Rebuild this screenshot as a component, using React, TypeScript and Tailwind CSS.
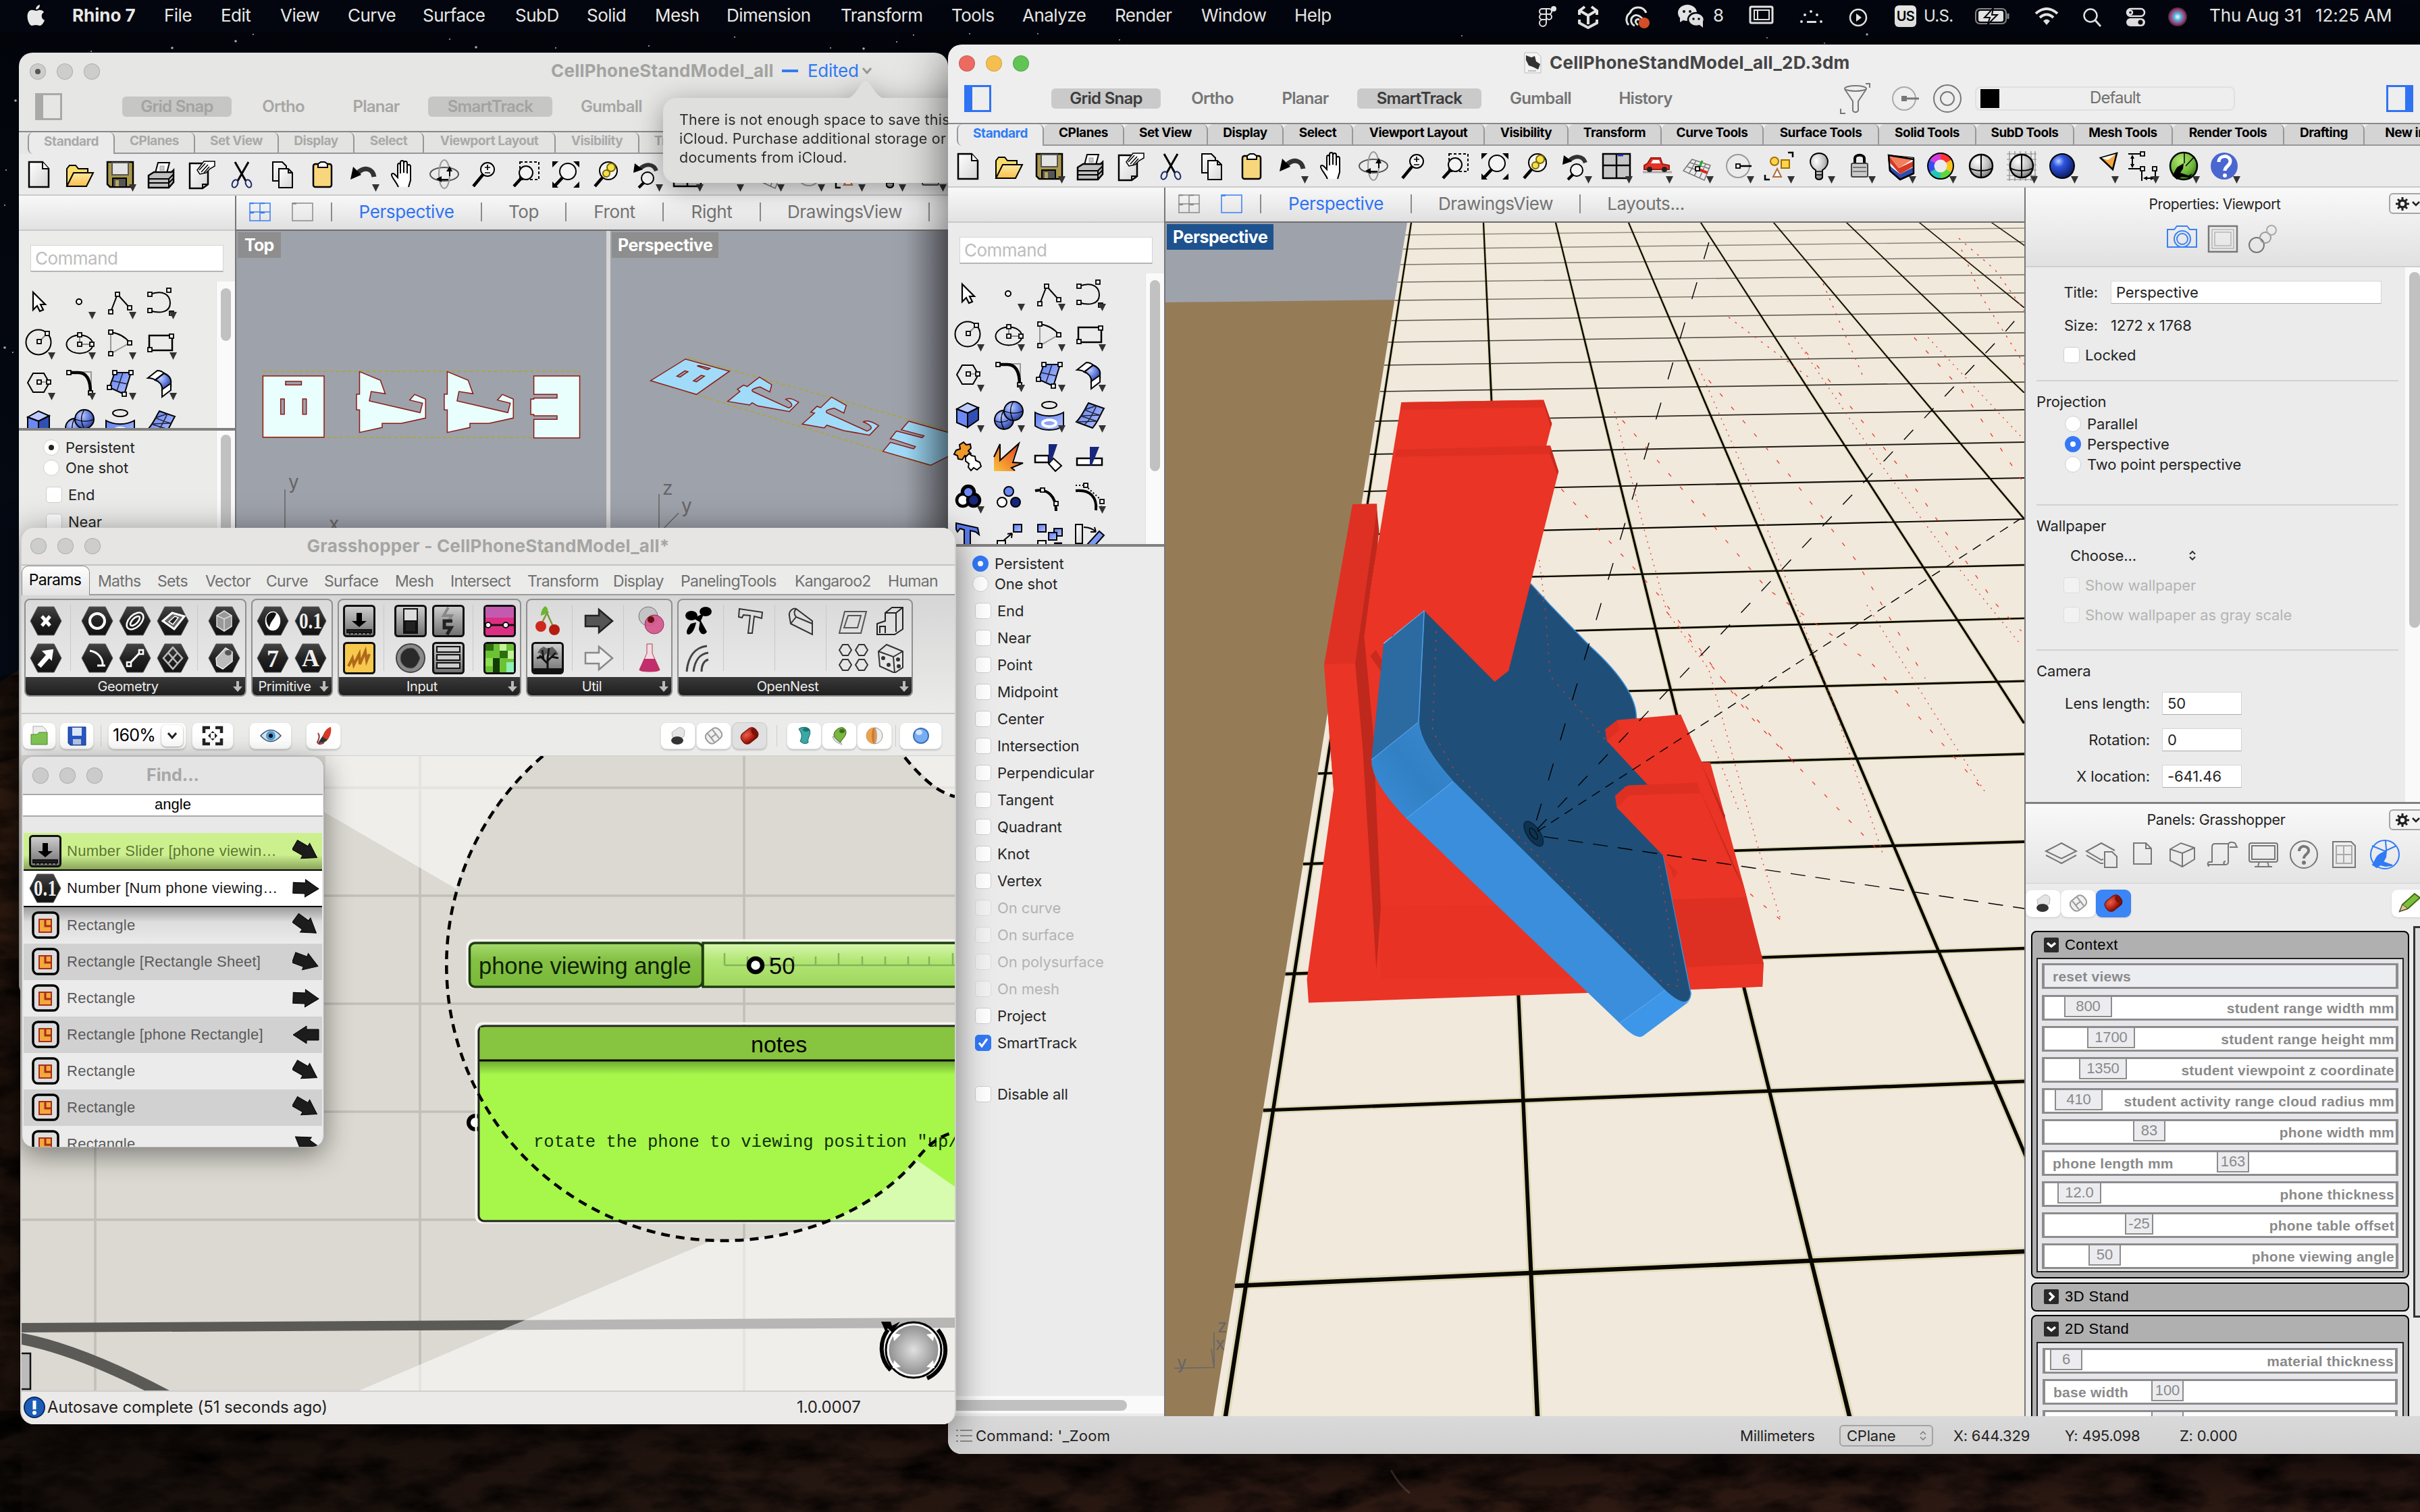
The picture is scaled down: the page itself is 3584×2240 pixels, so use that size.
import React from 'react';

type Kids = { children?: React.ReactNode };

/* ---------- shared icon primitives (60x60 cells) ---------- */
const N = ({ x, y }: { x: number; y: number }) => (
  <rect x={x - 3} y={y - 3} width="6" height="6" fill="#fff" stroke="#000" strokeWidth="1.8" />
);
const Tri = () => <path d="M43 45h11l-5.500 11z" fill="#333" />;
const Cell = ({ children, d }: Kids & { d?: boolean }) => (
  <svg viewBox="0 0 60 60" className="size-[60px] shrink-0" fill="none" stroke="#000" strokeWidth="2">
    {children}
    {d && <g stroke="none"><Tri /></g>}
  </svg>
);

const Defs = () => (
  <svg className="absolute size-0">
    <defs>
      <linearGradient id="page" x1="0" y1="0" x2="1" y2="1"><stop offset="0" stopColor="#fff" /><stop offset="1" stopColor="#d4d4d4" /></linearGradient>
      <linearGradient id="gold" x1="0" y1="0" x2="0" y2="1"><stop offset="0" stopColor="#ffe9a0" /><stop offset="1" stopColor="#f6bf4e" /></linearGradient>
      <radialGradient id="ball" cx=".35" cy=".3" r=".8"><stop offset="0" stopColor="#c3cfff" /><stop offset=".5" stopColor="#6580e0" /><stop offset="1" stopColor="#24357e" /></radialGradient>
      <radialGradient id="grey" cx=".35" cy=".3" r=".8"><stop offset="0" stopColor="#fff" /><stop offset=".6" stopColor="#bbb" /><stop offset="1" stopColor="#666" /></radialGradient>
      <radialGradient id="deep" cx=".35" cy=".3" r=".8"><stop offset="0" stopColor="#b8d0ff" /><stop offset=".3" stopColor="#2f55e0" /><stop offset="1" stopColor="#03104f" /></radialGradient>
      <linearGradient id="blue" x1="0" y1="0" x2="1" y2="1"><stop offset="0" stopColor="#5b7cf2" /><stop offset="1" stopColor="#b5c4fb" /></linearGradient>
      <linearGradient id="fire" x1="0" y1="1" x2="1" y2="0"><stop offset="0" stopColor="#f9c33c" /><stop offset="1" stopColor="#e6391d" /></linearGradient>
      <linearGradient id="ink" x1="0" y1="0" x2="0" y2="1"><stop offset="0" stopColor="#444" /><stop offset=".5" stopColor="#222" /><stop offset="1" stopColor="#111" /></linearGradient>
      <linearGradient id="steel" x1="0" y1="0" x2="0" y2="1"><stop offset="0" stopColor="#d0d0d0" /><stop offset="1" stopColor="#6e6e6e" /></linearGradient>
      <radialGradient id="ghg" cx=".4" cy=".3" r=".8"><stop offset="0" stopColor="#b4e870" /><stop offset=".6" stopColor="#6db53a" /><stop offset="1" stopColor="#1f5a0c" /></radialGradient>
      <radialGradient id="siri"><stop offset="0" stopColor="#fff" /><stop offset=".4" stopColor="#4bb6d8" /><stop offset=".75" stopColor="#b03a7c" /><stop offset="1" stopColor="#333" /></radialGradient>
      <radialGradient id="redcan" cx=".4" cy=".3" r=".8"><stop offset="0" stopColor="#e8604a" /><stop offset=".6" stopColor="#b01d10" /><stop offset="1" stopColor="#5a0a04" /></radialGradient>
    </defs>
  </svg>
);

const Lens = ({ x = 34, y = 23, r = 10 }: { x?: number; y?: number; r?: number }) => (
  <g><path d={`M${x - r * 0.7} ${y + r * 0.8}L13 48`} strokeWidth="4.500" /><circle cx={x} cy={y} r={r} fill="#f4f4f4" /></g>
);

const toolIcons: React.ReactNode[] = [
  <Cell key="0"><path d="M15 12h20l9 10v27H15z" fill="url(#page)" strokeWidth="2.500" /><path d="M35 12v10h9" fill="#fff" /></Cell>,
  <Cell key="1"><path d="M11 48V22l4-5h9l4 5h14v8" fill="#f9dd6a" /><path d="M11 48l10-20h29L40 48z" fill="url(#gold)" /></Cell>,
  <Cell key="2" d><path d="M11 12h38v37H15l-4-4z" fill="#a9974b" strokeWidth="2.500" /><rect x="18" y="13" width="24" height="18" fill="#e3e3e3" stroke="#555" /><path d="M19 36h20v13H19z" fill="#555" /><path d="M23 39h5v9h-5z" fill="#b7a75e" stroke="none" /></Cell>,
  <Cell key="3"><path d="M22 28l4-15h17l-4 15" fill="#fff" /><path d="M12 32l8-5h26l3-3v18l-7 8H12z" fill="#bfbfbf" strokeWidth="2.500" /><path d="M12 37h30l7-7M12 43h30l7-7M42 37v12" /><rect x="29" y="18" width="6" height="6" fill="#ccc" stroke="#999" strokeWidth="1" /></Cell>,
  <Cell key="4"><path d="M13 14h24l3 4v27l-8 6H13z" fill="url(#page)" strokeWidth="2.500" /><path d="M32 51v-6h8" /><path d="M24 24l10-13h16v7l-7 4-6 6-9 2z" fill="#fff" strokeWidth="1.500" /><path d="M27 24l9-10M30 27l10-11M34 28l8-9" strokeWidth="1.500" /></Cell>,
  <Cell key="5"><path d="M20 12l16 28M40 12L24 40" strokeWidth="3" /><ellipse cx="20" cy="44" rx="4" ry="6" stroke="#1c2a66" transform="rotate(25 20 44)" /><ellipse cx="40" cy="44" rx="4" ry="6" stroke="#1c2a66" transform="rotate(-25 40 44)" /></Cell>,
  <Cell key="6"><path d="M16 12h14l6 6v22H16z" fill="url(#page)" /><path d="M25 22h14l6 6v22H25z" fill="url(#page)" /><path d="M39 22v6h6" /></Cell>,
  <Cell key="7"><rect x="16" y="15" width="27" height="34" rx="3" fill="#f8d67c" strokeWidth="2.500" /><path d="M23 20v-5l4-3h6l4 3v5z" fill="#fff" /></Cell>,
  <Cell key="8" d><path d="M46 34C44 22 32 18 22 28" stroke="#333" strokeWidth="7" /><path d="M11 38l4-19 12 12z" fill="#000" stroke="none" /></Cell>,
  <Cell key="9"><path d="M22 49C18 40 11 34 12 30c3-3 6 2 9 5V17c0-4 4-4 4 0v12V13c0-4 5-4 5 0v15V14c0-4 5-4 5 0v15V19c0-4 5-4 5 0v20l-3 10" fill="#fff" /></Cell>,
  <Cell key="10"><ellipse cx="30" cy="30" rx="21" ry="10" stroke="#555" /><ellipse cx="30" cy="30" rx="8" ry="21" stroke="#999" /><path d="M38 33v-9M36 38h-14" /><path d="M33 26l5-8 4 8zM26 33l-8 4 8 5z" fill="#000" stroke="none" /></Cell>,
  <Cell key="11"><Lens /><path d="M30 20h8M34 16v8M30 28h8" strokeWidth="1.700" /></Cell>,
  <Cell key="12"><rect x="22" y="12" width="28" height="26" strokeDasharray="4 3" /><Lens x={31} y={28} r={10} /></Cell>,
  <Cell key="13"><g fill="#000" stroke="none"><path d="M10 11h9l-9 9zM50 11h-9l9 9zM10 50h9l-9-9zM50 50h-9l9-9z" /></g><Lens x={33} y={26} r={12} /></Cell>,
  <Cell key="14"><Lens x={33} y={25} r={13} /><circle cx="37" cy="20" r="6" fill="#f6e14a" stroke="#7a6a00" /><circle cx="30" cy="29" r="5" fill="#f6e14a" stroke="#7a6a00" /></Cell>,
  <Cell key="15" d><path d="M44 25C40 14 28 14 20 22" strokeWidth="6" stroke="#333" /><path d="M10 28l2-14 12 9z" fill="#000" stroke="none" /><circle cx="31" cy="36" r="9" fill="#f4f4f4" /><path d="M26 42l-8 8" strokeWidth="4" /></Cell>,
  <Cell key="16" d><rect x="10" y="12" width="40" height="36" fill="#c6c6c6" strokeWidth="2.500" /><path d="M30 12v36M10 29h40" strokeWidth="2.500" /><path d="M32 14h8" stroke="#2233bb" strokeWidth="3" /></Cell>,
  <Cell key="17" d><path d="M9 39h43" stroke="#aaa" strokeWidth="3" /><path d="M11 35v-6l5-3 5-8h14l3 9 10 2v6z" fill="#e23427" stroke="#9c1a10" /><path d="M21 26l3-5h9l2 5z" fill="#fff" stroke="none" /><circle cx="19" cy="35" r="4" fill="#222" stroke="none" /><circle cx="41" cy="35" r="4" fill="#222" stroke="none" /></Cell>,
  <Cell key="18" d><path d="M22 20l27 9-9 22-31-14zM19 25l29 9M15 31l29 10M28 22L17 42M35 25L25 45M42 27l-9 21" stroke="#777" strokeWidth="1.500" /><path d="M30 34l15 6" stroke="#d22" strokeWidth="4" /><path d="M33 32l4-10" stroke="#2a2" strokeWidth="3" /><N x={30} y={34} /></Cell>,
  <Cell key="19" d><circle cx="30" cy="30" r="17" stroke="#999" /><path d="M30 30h20" strokeWidth="2.500" /><N x={30} y={30} /></Cell>,
  <Cell key="20" d><circle cx="24" cy="23" r="6" fill="#ffd54a" stroke="#a66b00" /><rect x="34" y="21" width="12" height="12" fill="#ffd54a" stroke="#a66b00" /><path d="M22 46l6-12 6 12z" stroke="#b06a3a" fill="#fff" /><path d="M44 10h7v7M10 43v7h7" strokeWidth="2.500" /></Cell>,
  <Cell key="21" d><path d="M25 36c-13-8-9-25 5-25s18 17 5 25v11c-2 4-8 4-10 0z" fill="url(#grey)" /><path d="M25 38h10M25 43h10" strokeWidth="1.500" /></Cell>,
  <Cell key="22" d><path d="M23 26v-7c0-7 14-7 14 0v7" strokeWidth="4" /><rect x="18" y="26" width="24" height="20" rx="2" fill="#c9c9c9" stroke="#444" /><path d="M20 32h20M20 38h20" stroke="#777" /></Cell>,
  <Cell key="23" d><path d="M13 14l2 23 15 13 20-9V18z" fill="#2d4cae" /><path d="M13 14l1 15 16 13 19-10V18z" fill="#fff" stroke="none" /><path d="M13 14l15 19 21-10v8L30 42 14 24z" fill="#d63a22" stroke="none" /><path d="M13 14l20 3 16 3-21 13z" fill="#f47d5b" stroke="none" /><path d="M13 14l2 23 15 13 20-9V20z" strokeWidth="2.500" /></Cell>,
  <Cell key="24" d><g strokeWidth="9"><path d="M30 16a14 14 0 0 1 12 7" stroke="#f33" /><path d="M42 23a14 14 0 0 1 0 14" stroke="#f9c21c" /><path d="M42 37a14 14 0 0 1-12 7" stroke="#5fd63c" /><path d="M30 44a14 14 0 0 1-12-7" stroke="#22c7b8" /><path d="M18 37a14 14 0 0 1 0-14" stroke="#3a4cf0" /><path d="M18 23a14 14 0 0 1 12-7" stroke="#d43be0" /></g><circle cx="30" cy="30" r="19" /></Cell>,
  <Cell key="25"><circle cx="30" cy="30" r="17" fill="url(#grey)" strokeWidth="2.500" /><path d="M30 13v34M13 33c9 5 25 5 34 0" /></Cell>,
  <Cell key="26" d><path d="M8 12h44M8 20h44M8 28h44M8 36h44M8 44h44M8 50h44M12 8v44M20 8v44M28 8v44M36 8v44M44 8v44M50 8v44" stroke="#888" strokeWidth="1.200" /><circle cx="30" cy="30" r="17" fill="url(#grey)" strokeWidth="2.500" /><path d="M30 13v34M13 33c9 5 25 5 34 0" /></Cell>,
  <Cell key="27" d><circle cx="30" cy="30" r="18" fill="url(#deep)" /></Cell>,
  <Cell key="28" d><path d="M27 18l24-7-6 24z" fill="#f6a53d" strokeWidth="2.500" /><path d="M28 18l22-6-12 9z" fill="#fff" stroke="none" /></Cell>,
  <Cell key="29" d><path d="M8 12h20M8 34h20M14 16v14M28 34v18M48 34v18M32 48h14" /><path d="M14 13l-3 6h6zM14 33l-3-6h6zM30 48l6-3v6zM47 48l-6-3v6z" fill="#000" stroke="none" /><N x={29} y={12} /><N x={29} y={34} /><N x={47} y={34} /></Cell>,
  <Cell key="30" d><circle cx="30" cy="30" r="20" fill="url(#ghg)" strokeWidth="2.500" /><path d="M31 10v16M46 16L33 30" strokeWidth="1.500" /><path d="M13 44c5-6 5-12 10-14l7-4-1 8-4 6 12 4 6-3-4 6-12-1-7 4z" fill="#000" stroke="none" /></Cell>,
  <Cell key="31" d><circle cx="30" cy="30" r="20" fill="#4a67d0" stroke="none" /><path d="M22 24c0-11 17-11 17-1 0 7-8 7-8 14" stroke="#fff" strokeWidth="5" /><circle cx="31" cy="44" r="3" fill="#fff" stroke="none" /></Cell>,
];

const sideIcons: React.ReactNode[] = [
  <Cell key="0"><path d="M21 16v26l6-6 4 8 5-2-4-8h7z" fill="#fff" strokeWidth="2.200" /></Cell>,
  <Cell key="1" d><circle cx="29" cy="30" r="4" fill="#fff" /></Cell>,
  <Cell key="2" d><path d="M16 45l10-26 18 20" /><N x={16} y={45} /><N x={26} y={19} /><N x={44} y={39} /></Cell>,
  <Cell key="3" d><path d="M14 19C34 12 44 20 44 32c0 14-16 16-30 11" /><N x={14} y={19} /><N x={42} y={13} /><N x={14} y={43} /><N x={46} y={47} /></Cell>,
  <Cell key="4" d><circle cx="29" cy="30" r="18.500" /><path d="M30 29l12-12" stroke="#888" /><N x={30} y={29} /><N x={42} y={17} /></Cell>,
  <Cell key="5" d><ellipse cx="30" cy="33" rx="19.500" ry="13.500" /><path d="M30 19v14h18" stroke="#888" /><N x={30} y={33} /><N x={30} y={19} /><N x={48} y={33} /></Cell>,
  <Cell key="6" d><path d="M16 15v32l28-16" stroke="#999" /><path d="M16 15c12 2 22 7 28 16" /><N x={16} y={15} /><N x={44} y={31} /><N x={16} y={47} /></Cell>,
  <Cell key="7" d><rect x="13" y="20" width="34" height="22" strokeWidth="2.500" /><N x={46} y={21} /><N x={14} y={41} /></Cell>,
  <Cell key="8" d><path d="M13 30l8-14h16l8 14-8 14H21z" /><path d="M30 29h14" stroke="#999" /><N x={30} y={29} /><N x={44} y={29} /></Cell>,
  <Cell key="9" d><path d="M28 14h19v30" stroke="#999" /><path d="M14 15h14c14 0 18 14 18 30" strokeWidth="4.500" /><N x={14} y={15} /><N x={46} y={45} /></Cell>,
  <Cell key="10" d><path d="M22 15h24L36 47 14 37z" fill="url(#blue)" /><path d="M34 15l-9 27M18 27l23 5" strokeWidth="1.500" stroke="#223" /><N x={22} y={15} /><N x={46} y={15} /><N x={14} y={37} /><N x={36} y={47} /></Cell>,
  <Cell key="11" d><path d="M11 23l14-11c4 0 7 1 10 4L22 26c-3-2-7-3-11-3z" fill="#fff" /><path d="M35 16c9 4 11 12 10 22l-10-4-3 3c0-6-4-9-10-11z" fill="url(#ball)" /><path d="M32 36v15l13-10V28z" fill="#fff" /><path d="M35 16c9 4 11 10 10 15l-13 9c1-6-4-12-10-14z" fill="url(#ball)" /></Cell>,
  <Cell key="12" d><path d="M13 21l16-9 16 7-16 8z" fill="#bdcafb" /><path d="M13 21l16 6v21l-16-7z" fill="#6b88f4" /><path d="M45 19l-16 8v21l16-11z" fill="#2f4fb4" /></Cell>,
  <Cell key="13" d><circle cx="23" cy="37" r="14" fill="url(#ball)" /><circle cx="37" cy="24" r="14" fill="url(#ball)" /><path d="M37 10c-6 9-6 18 0 28M23 24c10 4 20 4 28 0M22 24c-5 9-4 18 1 27M9 38c5 3 12 3 20 0" strokeWidth="1.300" /></Cell>,
  <Cell key="14" d><ellipse cx="30" cy="15" rx="11" ry="5" /><path d="M9 26c12 7 30 7 42 0v20c-12 8-30 8-42 0z" fill="url(#blue)" /><ellipse cx="30" cy="42" rx="10" ry="5" stroke="#fff" strokeWidth="4" /></Cell>,
  <Cell key="15" d><path d="M28 12l23 8c-7 12-9 20-17 29L10 40c9-9 12-18 18-28z" fill="url(#blue)" /><path d="M40 16C34 28 30 38 22 44M22 22c8 3 14 6 24 8M16 31c8 3 16 5 25 8M22 22l18-6M16 31l30-1M10 40l31-1" strokeWidth="1.500" stroke="#223" /></Cell>,
  <Cell key="16"><path d="M12 22l6-2-1-6 6-4 4 4 6-1 1 6-4 4 4 4-4 5-5-2-4 6-6-1-1-5-5-2z" fill="#f0982a" /><path d="M26 32l5-5 4 3 5 1 1 6 6 3 2 6-6 5-5-3-4 4-4-5 1-5-5-4z" fill="#fff" /></Cell>,
  <Cell key="17"><path d="M8 53V32l8-20 1 24 27-24-9 27 14 2-15 6 6 6z" fill="url(#fire)" stroke="none" /><path d="M8 32l9-19v24l28-25-9 28 15 1-17 7 5 4" /></Cell>,
  <Cell key="18"><path d="M9 30h20v10H9z" fill="#fff" strokeWidth="2.500" /><path d="M36 34l12 11-9 8-10-11z" fill="#fff" /><path d="M29 13h13l-9 26-4-1z" fill="#16267a" stroke="none" /></Cell>,
  <Cell key="19"><path d="M11 34h37v10H11z" fill="#fff" strokeWidth="2.500" /><path d="M30 17h14L33 44h-3z" fill="#16267a" stroke="none" /></Cell>,
  <Cell key="20" d><circle cx="30" cy="24" r="9" strokeWidth="4.500" /><circle cx="22" cy="36" r="9" fill="#fff" strokeWidth="4.500" /><circle cx="38" cy="36" r="9" fill="#16267a" strokeWidth="4.500" /><circle cx="30" cy="24" r="7" fill="#6b88f4" /></Cell>,
  <Cell key="21"><circle cx="30" cy="23" r="7" fill="#6b88f4" /><circle cx="20" cy="39" r="7" fill="#fff" /><circle cx="40" cy="39" r="7" fill="#16267a" /></Cell>,
  <Cell key="22"><path d="M9 22c18-4 31 8 31 30" strokeWidth="4" /><N x={20} y={21} /><N x={40} y={41} /></Cell>,
  <Cell key="23" d><path d="M9 14h14l24 22v18" strokeDasharray="2 3" /><path d="M9 22c22-2 32 10 30 29" strokeWidth="4" /><N x={24} y={14} /><N x={48} y={38} /></Cell>,
  <Cell key="24"><path d="M12 10l32 7 2 10-5-4-8-2v39h-9V20l-6-2-4 5-2-4z" fill="#5b7cf2" /></Cell>,
  <Cell key="25"><rect x="37" y="12" width="12" height="11" fill="url(#blue)" /><path d="M22 36l13-11M35 25l-7 1M35 25l-1 7" /><rect x="13" y="36" width="12" height="11" fill="#fff" /></Cell>,
  <Cell key="26"><rect x="13" y="12" width="12" height="11" fill="url(#blue)" /><rect x="37" y="18" width="12" height="11" fill="url(#blue)" /><rect x="29" y="24" width="12" height="11" fill="url(#blue)" /><rect x="13" y="36" width="12" height="11" fill="#fff" /><path d="M37 40h12" strokeWidth="3" /></Cell>,
  <Cell key="27"><rect x="9" y="12" width="10" height="28" fill="url(#page)" /><path d="M21 16c8 0 13 2 18 7M39 23l-2-7M39 23h-8" /><path d="M24 44l20-22 7 6-18 20z" fill="#7d97f7" /></Cell>,
];

/* ---------- small controls ---------- */
const SideToggle = ({ c, flip }: { c: string; flip?: boolean }) => (
  <svg viewBox="0 0 40 40" className="h-10 w-10 shrink-0" transform={flip ? 'scale(-1 1)' : undefined}>
    <rect x="1.500" y="1.500" width="37" height="37" fill="none" stroke={c} strokeWidth="3" /><rect width="12" height="40" fill={c} />
  </svg>
);
const Check = ({ on, dim }: { on?: boolean; dim?: boolean }) => (
  <span className={'flex size-6 shrink-0 items-center justify-center rounded-[5px] border ' + (on ? 'border-[#2f7bf6] bg-[#3478f6]' : dim ? 'border-[#dcdcdc] bg-[#f2f2f2]' : 'border-[#cfcfcf] bg-white')}>
    {on && <svg viewBox="0 0 20 20" className="size-5"><path d="M4 10l4 5 8-11" fill="none" stroke="#fff" strokeWidth="3" /></svg>}
  </span>
);
const Radio = ({ on, grey }: { on?: boolean; grey?: boolean }) => (
  <span className={'flex size-6 shrink-0 items-center justify-center rounded-full ' + (on && !grey ? 'bg-[#3478f6]' : 'border border-[#cfcfcf] bg-white')}>
    {on && <span className={'size-2 rounded-full ' + (grey ? 'bg-[#222]' : 'bg-white')} />}
  </span>
);
const Lights = ({ colors, c = 'left-4' }: { colors: string[]; c?: string }) => (
  <div className={'absolute flex gap-4 ' + c}>
    {colors.map((k, i) => <span key={i} className={'flex size-6 items-center justify-center rounded-full border border-black/15 ' + k}>{k.includes('doc') && <i className="size-2 rounded-full bg-[#555]" />}</span>)}
  </div>
);

/* ---------- Rhino window chrome ---------- */
const options = [
  { t: 'Grid Snap', c: 'w-[162px]', on: true, m: 'ml-[89px]' },
  { t: 'Ortho', c: 'w-[153px]' },
  { t: 'Planar', c: 'w-[122px]' },
  { t: 'SmartTrack', c: 'w-[184px]', on: true, m: 'ml-4' },
  { t: 'Gumball', c: 'w-[175px]' },
  { t: 'History', c: 'w-[136px]' },
];
const tabs = [
  ['Standard', 'w-[129px]'], ['CPlanes', 'w-[119px]'], ['Set View', 'w-[124px]'], ['Display', 'w-[112px]'], ['Select', 'w-[103px]'],
  ['Viewport Layout', 'w-[195px]'], ['Visibility', 'w-[124px]'], ['Transform', 'w-[138px]'], ['Curve Tools', 'w-[151px]'], ['Surface Tools', 'w-[171px]'],
  ['Solid Tools', 'w-[144px]'], ['SubD Tools', 'w-[145px]'], ['Mesh Tools', 'w-[146px]'], ['Render Tools', 'w-[165px]'], ['Drafting', 'w-[119px]'], ['New in V7', 'w-[151px]'],
];

const Chrome = ({ active }: { active?: boolean }) => (
  <>
    <div className="flex h-12 shrink-0 items-center">
      <div className="flex w-16 justify-end"><SideToggle c={active ? '#2f73f3' : '#a9a9a7'} /></div>
      {options.slice(0, active ? 6 : 5).map((o) => (
        <span key={o.t} className={`flex h-[30px] shrink-0 items-center justify-center rounded-[6px] text-[24px] font-semibold tracking-[-0.03em] ${o.c} ${o.m ?? ''} ${o.on ? (active ? 'bg-[#cacaca] text-[#3c3c3c]' : 'bg-[#c6c6c4] text-[#a3a3a1]') : active ? 'text-[#757575]' : 'text-[#a6a6a4]'}`}>{o.t}</span>
      ))}
      {active && (
        <>
          <svg viewBox="0 0 45 46" className="ml-[220px] h-[46px] w-[45px] shrink-0" fill="none" stroke="#777" strokeWidth="2">
            <ellipse cx="23" cy="8" rx="16" ry="4" /><path d="M7 9l12 18v14c2 3 6 3 8 0V27L39 9M38 1h6v6M1 38v7h7" />
          </svg>
          <svg viewBox="0 0 40 40" className="ml-8 size-10 shrink-0" fill="none" stroke="#aaa" strokeWidth="2"><circle cx="18" cy="20" r="17" /><path d="M18 20h22" stroke="#777" strokeWidth="3" /><rect x="14" y="16" width="8" height="8" fill="#777" stroke="none" /></svg>
          <svg viewBox="0 0 42 42" className="ml-[21px] size-[42px] shrink-0" fill="none" stroke="#777" strokeWidth="2"><circle cx="21" cy="21" r="20" /><circle cx="21" cy="21" r="10" /></svg>
          <div className="ml-5 flex h-9 w-[385px] items-center rounded-[8px] border-2 border-[#e0e0e0] pl-[6px]">
            <span className="size-7 bg-black" /><span className="flex-1 pr-3 pb-[2px] pl-2 text-center text-[24px] tracking-[-0.04em] text-[#707070]">Default</span>
          </div>
          <div className="ml-[224px]"><SideToggle c="#2f73f3" flip /></div>
        </>
      )}
    </div>
    <div className="mt-3 flex h-[34px] shrink-0 border-t-2 border-[#88888c] bg-inherit pl-[13px]">
      {tabs.slice(0, active ? 16 : 8).map(([t, w], i) => (
        <span key={t} className={`flex shrink-0 items-center justify-center rounded-t-[8px] border-r-2 border-[#97979b] pb-[6px] text-[19px] font-bold tracking-[-0.025em] ${w} ${i === 0 ? 'rounded-l-[8px] border-l-2 bg-[#ebebeb]' : active ? 'border-b-2 bg-[#d4d4d4]' : 'border-b-2 bg-[#e3e3e2]'} ${active ? (i === 0 ? 'text-[#2f7bf6]' : 'text-black') : 'text-[#a9a9a8]'}`}>{t}</span>
      ))}
    </div>
    <div className="flex h-[62px] shrink-0 border-b-2 border-[#cbcbcb] bg-[#ebebeb]">{toolIcons}</div>
  </>
);

const ViewNav = ({ items, single }: { items: string[][]; single?: boolean }) => (
  <div className="flex h-[52px] items-center border-b-2 border-[#6e6e6e] bg-linear-to-b from-[#f8f8f8] to-[#e0e0e0] pb-[2px] text-[26px] tracking-[-0.015em] text-[#737373]">
    <div className="flex w-[140px] shrink-0 items-center gap-[31px] pl-[19px]">
      <svg viewBox="0 0 32 28" className="h-7 w-8" fill="none" stroke={single ? '#8a8a8a' : '#3a7df5'} strokeWidth="1.500"><path d="M1 1h30v26H1zM16 1v26M1 14h30" /><path d="M1 1h6M17 1h6M1 15h6M17 15h6" strokeWidth="2.500" /></svg>
      <svg viewBox="0 0 32 28" className="h-7 w-8" fill="none" stroke={single ? '#3a7df5' : '#8a8a8a'} strokeWidth="1.500"><path d="M1 1h30v26H1z" /><path d="M1 1.500h6" strokeWidth="2.500" /></svg>
    </div>
    {items.map(([t, w], i) => (
      <span key={i} className={`flex h-7 shrink-0 items-center justify-center border-l-2 border-[#8b8b8b] ${w} ${i === 0 ? 'text-[#2f73f3]' : ''}`}>{t}</span>
    ))}
  </div>
);

const SidePane = ({ tall }: { tall?: boolean }) => (
  <>
    <div className="h-[52px] shrink-0 border-b-2 border-[#c9c9c9] bg-linear-to-b from-[#f8f8f8] to-[#e2e2e2]" />
    <div className="mt-[21px] ml-[17px] flex h-10 w-[286px] shrink-0 items-center border border-b-2 border-[#d5d5d5] border-b-[#b5b5b5] bg-white pl-[6px] text-[26px] tracking-[-0.02em] text-[#bdbdbd]">Command</div>
    <div className={`mt-[14px] flex shrink-0 justify-between overflow-hidden ${tall ? 'h-[401px]' : 'h-[217px]'}`}>
      <div className="grid h-max grid-cols-4">{tall ? sideIcons : sideIcons.slice(0, 16)}</div>
      <div className="h-full w-7 border-l border-[#e3e3e3] bg-[#fafafa] px-[6px] pt-[10px]"><div className={`rounded-full bg-[#c1c1c1] ${tall ? 'h-[283px]' : 'h-[78px]'}`} /></div>
    </div>
    <div className="h-1 shrink-0 bg-[#818181]" />
  </>
);

const snaps: [string, string][] = [
  ['End', ''], ['Near', ''], ['Point', ''], ['Midpoint', ''], ['Center', ''], ['Intersection', ''], ['Perpendicular', ''], ['Tangent', ''], ['Quadrant', ''], ['Knot', ''], ['Vertex', ''],
  ['On curve', 'dim'], ['On surface', 'dim'], ['On polysurface', 'dim'], ['On mesh', 'dim'], ['Project', ''], ['SmartTrack', 'on'],
];
const Snaps = ({ grey }: { grey?: boolean }) => (
  <div className="flex flex-col text-[22px] tracking-[-0.005em] text-[#262626]">
    <label className="mt-[10px] flex h-[30px] items-center gap-[9px] pl-9"><Radio on grey={grey} />Persistent</label>
    <label className="mb-[5px] flex h-[30px] items-center gap-[9px] pl-9"><Radio />One shot</label>
    {snaps.slice(0, grey ? 2 : 17).map(([t, s]) => (
      <label key={t} className={`flex h-10 items-center gap-[9px] pl-10 ${s === 'dim' ? 'text-[#b3b3b3]' : ''}`}><Check on={s === 'on'} dim={s === 'dim'} />{t}</label>
    ))}
    {!grey && <label className="mt-9 flex h-10 items-center gap-[9px] pl-10"><Check />Disable all</label>}
  </div>
);

/* ---------- back window ---------- */
const hookA = 'M588 452L622 490 630 550 607 540 604 582 687 634 691 592 670 578 678 553 696 574V658L656 682H625V700L588 722V622H583V552H588z';
const BackWindow = () => (
  <section className="absolute left-[28px] top-[78px] flex h-[1400px] w-[1376px] flex-col overflow-hidden rounded-[20px] bg-[#e6e6e4]">
    <div className="relative flex h-14 shrink-0 items-center">
      <Lights colors={['bg-[#cdcdcb] doc', 'bg-[#cdcdcb]', 'bg-[#cdcdcb]']} />
      <div className="flex items-center pb-[2px] pl-[788px] text-[26px]"><b className="w-[342px] tracking-[0.008em] text-[#a3a3a1]">CellPhoneStandModel_all</b><i className="mr-[14px] h-1 w-6 bg-[#2f7bf6]" /><span className="tracking-[-0.01em] text-[#2f7bf6]">Edited</span>
        <svg viewBox="0 0 16 10" className="ml-1 h-[10px] w-4" fill="none" stroke="#999" strokeWidth="3"><path d="M2 1l6 7 6-7" /></svg>
      </div>
    </div>
    <Chrome />
    <div className="flex min-h-0 flex-1">
      <div className="flex w-80 shrink-0 flex-col overflow-hidden bg-[#ebebea]"><SidePane />
        <div className="flex justify-between"><Snaps grey /><div className="h-[800px] w-7 border-l border-[#e3e3e3] bg-[#fafafa] px-[6px] pt-[6px]"><div className="h-full rounded-full bg-[#c1c1c1]" /></div></div>
      </div>
      <div className="w-[2px] shrink-0 bg-[#777]" />
      <div className="w-[1054px] shrink-0">
        <ViewNav items={[['Perspective', 'w-[222px]'], ['Top', 'w-[125px]'], ['Front', 'w-[144px]'], ['Right', 'w-[144px]'], ['DrawingsView', 'w-[250px]'], ['', 'w-[26px]']]} />
        <div className="relative h-[500px] bg-[#9ea2ab]">
          <svg viewBox="350 342 1054 500" className="absolute inset-0 h-full w-full">
            <rect x="898" y="342" width="6" height="500" fill="#d6d6d6" />
            <g transform="matrix(.9056 0 0 .3333 0 400)" strokeWidth="1.500">
              <g fill="none" stroke="#b0a820" strokeDasharray="5 4"><path vectorEffect="non-scaling-stroke" d="M430 451H948V745H430z" /><path vectorEffect="non-scaling-stroke" d="M1125 390L1600 750 1520 870 1064 492z" /></g>
              <g fill="#e8fffe" stroke="#8c1a14">
                <path vectorEffect="non-scaling-stroke" fillRule="evenodd" d="M430 471H530V743H430zM467 495V511H493V495zM459 573V641H465V573zM495 573V641H501V573z" />
                <path vectorEffect="non-scaling-stroke" d={hookA} />
                <path vectorEffect="non-scaling-stroke" d={hookA} transform="translate(143.500 0)" />
                <path vectorEffect="non-scaling-stroke" d="M873 471H948V746H873V664H911V648H873V642H868V574H873V569H911V553H873z" />
              </g>
              <g fill="#a0dcfa" stroke="#8c1a14">
                <path vectorEffect="non-scaling-stroke" fillRule="evenodd" d="M1121 396L1193 450 1139 553 1064 492zM1140 426L1157 443 1161 437 1144 425zM1120 448L1107 472 1112 476 1125 452zM1147 468L1134 493 1139 497 1152 472z" />
                <path vectorEffect="non-scaling-stroke" d="M1242 476L1262 510 1259 542 1243 520Q1226 530 1231 540L1290 613Q1302 600 1285 575 1292 564 1306 588L1291 629 1239 604 1230 590 1226 600 1190 584 1210 540 1206 530 1216 512 1222 518z" />
                <path vectorEffect="non-scaling-stroke" d="M1360 565L1384 602 1380 636 1364 614Q1348 622 1352 634L1418 716Q1434 700 1412 675 1420 662 1437 692L1422 734 1380 714 1352 690 1348 702 1312 685 1332 636 1326 632 1336 606 1342 612z" />
                <path vectorEffect="non-scaling-stroke" d="M1486 672L1600 760 1522 868 1444 806 1456 766 1494 795 1497 785 1460 752 1456 750 1466 716 1508 745 1511 737 1474 710z" />
              </g>
            </g>
            <g stroke="#666" strokeWidth="1.500" fill="none"><path d="M422 725V800M976 732V800M976 790L1005 760" /></g>
            <g fill="#666" fontSize="28" fontFamily="Inter"><text x="427" y="724">y</text><text x="487" y="786">x</text><text x="981" y="733">z</text><text x="1009" y="759">y</text></g>
            <defs><linearGradient id="sh"><stop offset="0" stopColor="#000" stopOpacity="0" /><stop offset="1" stopColor="#000" stopOpacity=".3" /></linearGradient></defs>
            <rect x="1340" y="342" width="64" height="500" fill="url(#sh)" />
          </svg>
          <span className="absolute left-[2px] top-[2px] flex h-[38px] items-center bg-[#8e8e8e] px-[10px] text-[25px] font-bold tracking-[-0.03em] text-white">Top</span>
          <span className="absolute left-[556px] top-[2px] flex h-[38px] items-center bg-[#8e8e8e] px-[9px] text-[25px] font-bold tracking-[-0.02em] text-white">Perspective</span>
        </div>
      </div>
    </div>
    <div className="absolute left-[954px] top-[42px] drop-shadow-[0_8px_20px_rgba(0,0,0,0.35)]">
      <svg viewBox="0 0 56 26" className="ml-[272px] block h-[26px] w-14"><path d="M0 26C14 24 20 0 28 0s14 24 28 26z" fill="#dfdfdd" /></svg>
      <p className="-mt-px h-[126px] w-[500px] rounded-[20px] bg-[#dfdfdd] pt-[18px] pl-6 text-[21.500px] leading-7 tracking-[0.01em] whitespace-pre text-[#2e2e2e]">{'There is not enough space to save this\niCloud. Purchase additional storage or\ndocuments from iCloud.'}</p>
    </div>
  </section>
);

/* ---------- perspective scene ---------- */
const verticals = [
  [2090, 330, 1815, 2098], [2197, 330, 2277, 2098], [2304, 330, 2739, 2098], [2412, 330, 3164, 2098],
  [2519, 330, 2998, 1072], [2627, 330, 2998, 769], [2735, 330, 2998, 582], [2843, 330, 2998, 456], [2950, 330, 3000, 365],
];
const rows = [
  [348, 338, 1], [369, 358, 1], [392, 381, 1], [418, 407, 1], [445, 434, 1], [475, 462, 1.1], [507, 493, 1.1], [541, 527, 1.2], [580, 566, 1.3], [624, 607, 1.4],
  [673, 655, 1.5], [728, 708, 1.7], [792, 769, 1.8], [861, 837, 2], [944, 916, 2.2], [1035, 1009, 2.6], [1146, 1117, 3], [1280, 1247, 3.5], [1443, 1405, 4], [1645, 1602, 4.8], [1905, 1854, 6],
];
const edgeX = (y: number) => 2084 - ((y - 330) * 287) / 1768;
const taper = ([x1, y1, x2, y2]: number[], k: number) => {
  const a = 1.1 * k;
  const b = (1.1 + ((y2 - 330) / 1768) * 2.2) * k;
  return `${x1 - a},${y1} ${x1 + a},${y1} ${x2 + b},${y2} ${x2 - b},${y2}`;
};
const dots = [
  'M816 157L870 410 910 580 985 700 1075 1080 1115 1230', 'M968 65L1060 310 1205 760 1300 1095', 'M1140 0L1290 260 1430 480 1548 650',
  'M680 470L690 560 700 715', 'M990 850L1040 1000', 'M1380 0L1548 210', 'M1270 565L1400 810 1484 962',
];
const dashes = ['M830 175L930 310 1090 530 1280 690 1484 962', 'M720 320L900 550 1060 800 1230 1010 1300 1095', 'M985 90L1130 290 1250 470 1375 720', 'M1160 30L1340 290 1500 560 1548 620', 'M1355 0L1440 110 1548 300', 'M1060 1175L1115 1230', 'M910 580L1020 735 1140 900'];
const Scene = () => (
  <svg viewBox="1726 330 1272 1768" className="h-[1768px] w-[1272px]">
    <defs><clipPath id="floor"><path d="M2084 330H2998V2098H1797z" /></clipPath>
      <linearGradient id="cr" x1="0" y1="1" x2="1" y2="0"><stop offset="0" stopColor="#3b8edb" /><stop offset=".5" stopColor="#3180c4" /><stop offset="1" stopColor="#3a8ad2" /></linearGradient></defs>
    <rect x="1726" y="330" width="1272" height="1768" fill="#957c57" />
    <path d="M1726 330H2090L2070 444 1726 448z" fill="#9ea2ab" />
    <path d="M2084 330H2998V2098H1797z" fill="#f1e9dc" />
    <g clipPath="url(#floor)">
      <g stroke="#d9d4a8" opacity=".7">{rows.filter((r) => r[2] > 1.9).map((r, i) => <line key={i} x1={edgeX(r[0])} y1={r[0]} x2="2998" y2={r[1]} strokeWidth={r[2] * 2} />)}</g>
      <g fill="#d9d4a8" opacity=".7">{verticals.map((v, i) => <polygon key={i} points={taper(v, 2)} />)}</g>
      <g stroke="#0a0800">{rows.map((r, i) => <line key={i} x1={edgeX(r[0])} y1={r[0]} x2="2998" y2={r[1]} strokeWidth={r[2] + 0.4} opacity={Math.min(1, 0.4 + i * 0.05)} />)}</g>
      <g fill="#0a0800">{verticals.map((v, i) => <polygon key={i} points={taper(v, 1)} />)}</g>
    </g>
    <path d="M2901 353L2955 400 2998 460M2905 370L2935 440 2998 540M2700 420L2760 560M2560 470L2680 560" fill="none" stroke="#e8392b" strokeWidth="1.300" strokeDasharray="3 9" />
    <g transform="matrix(.8227 0 0 .7015 1720 500)">
      <g fill="none" stroke="#e8392b" strokeWidth="1.300">
        {dots.map((d) => <path key={d} d={d} strokeDasharray="2 7" vectorEffect="non-scaling-stroke" />)}
        {dashes.map((d) => <path key={d} d={d} strokeDasharray="6 20" vectorEffect="non-scaling-stroke" />)}
      </g>
      <path fill="#ea3425" d="M293 690L365 632 400 645 600 900 900 1090 1050 1165 1084 1322 1082 1371 265 1405 262 1355 310 955z" />
      <path fill="#e33022" d="M395 1201L610 1198 740 1350 395 1355z" opacity=".2" />
      <path fill="#1f4f78" stroke="#3b8edb" strokeWidth="2" d="M473 577L665 520 700 565 770 650Q855 740 855 803L904 1095 953 1385Q950 1425 905 1378L525 938Q465 860 463 812z" />
      <path fill="#ea3425" d="M432 137L688 132 703 182 693 228 700 228 715 283 625 704 600 727 473 577 400 645 380 700 362 640 378 520z" />
      <path fill="#dd3022" d="M432 137L688 132 692 147 430 153zM423 237L697 228 700 246 420 252z" />
      <path fill="#c92b1e" d="M688 132L703 182 701 190 690 146zM700 228L715 283 713 290 699 246zM386 660L402 690 398 710 376 673z" />
      <path fill="#de3123" d="M344 352L388 351 390 440 362 630 349 688 293 690z" />
      <path fill="#ea3425" d="M293 690L349 688 362 860 387 1335 360 1370 300 1300 310 955z" />
      <path fill="#bf281c" d="M388 365L392 410 378 520 365 632 381 830 395 1205 387 1335 362 860 349 688z" />
      <path fill="#2c6aa2" d="M400 647L473 577 463 812 378 892z" />
      <path fill="url(#cr)" d="M378 892L463 812Q465 860 525 938L441 1016Q378 940 378 892z" />
      <path fill="#3b8edb" d="M441 1016L525 938 907 1378 825 1448z" />
      <path fill="#3e96e9" d="M825 1448L907 1378Q940 1415 953 1400L867 1475Q855 1485 825 1448z" />
      <path d="M400 647L473 577 463 812 378 892M441 1016L525 938M825 1448L907 1378" fill="none" stroke="#53a3ee" strokeWidth="1.500" />
      <path fill="#ea3425" d="M821 808L935 796 973 897 988 897 1050 1165 960 1000 874 943 802 852 799 828z" />
      <path fill="#ea3425" d="M836 948L965 940 1010 1010 1050 1165 1084 1322 1082 1371 953 1377 904 1095 820 993 817 968z" />
      <path fill="#dd3022" d="M799 828L821 808 825 828 802 852zM817 968L840 946 965 940 970 962 842 967 820 993zM920 1187L1052 1182 1084 1322 945 1330z" />
      <path fill="#c0281c" d="M971 897L1015 1010 1013 1018zM967 948L1050 1165 1030 1120z" />
      <path fill="#d42d20" d="M912 1108L930 1130 922 1142z" opacity=".6" />
      <path d="M668 525L690 560 700 715 800 850M495 620L488 830 530 920 905 1365 932 1370 895 1110" fill="none" stroke="#c93a3a" strokeWidth="1.300" strokeDasharray="3 10" vectorEffect="non-scaling-stroke" />
      <ellipse cx="670" cy="1048" rx="12" ry="29" transform="rotate(-28 670 1048)" fill="#0e3350" stroke="#0a2438" strokeWidth="2" />
      <ellipse cx="670" cy="1048" rx="5" ry="13" transform="rotate(-28 670 1048)" fill="none" stroke="#061521" strokeWidth="2" />
      <g fill="none" stroke="#000" strokeWidth="1.400">
        <path vectorEffect="non-scaling-stroke" strokeDasharray="26 36" d="M675 1020L928 25 996 -242" /><path vectorEffect="non-scaling-stroke" strokeDasharray="20 24" d="M677 1038L1510 0 1554 -60" />
        <path vectorEffect="non-scaling-stroke" strokeDasharray="14 10" d="M677 1043L1545 384" /><path vectorEffect="non-scaling-stroke" strokeDasharray="22 15" d="M688 1054L1554 1206" />
      </g>
    </g>
    <g stroke="#666" fill="none" strokeWidth="1.500"><path d="M1798 1973V2026L1739 2027M1798 2026L1794 1998" /></g>
    <g fill="#666" fontFamily="Inter" fontSize="26"><text x="1803" y="1974">z</text><text x="1800" y="2000">x</text><text x="1743" y="2028">y</text></g>
  </svg>
);

/* ---------- right panels ---------- */
const Gear = () => (
  <span className="absolute right-[-12px] top-[8px] flex h-[31px] w-[58px] items-center gap-1 rounded-[6px] border-2 border-[#a5a5a5] bg-[#f4f4f4] pl-2">
    <svg viewBox="0 0 20 20" className="size-5" fill="none" stroke="#222"><circle cx="10" cy="10" r="5" strokeWidth="3.500" /><path d="M10 0v4M10 16v4M0 10h4M16 10h4M3 3l3 3M14 14l3 3M3 17l3-3M14 6l3-3" strokeWidth="3" /></svg>
    <svg viewBox="0 0 12 8" className="h-2 w-3" fill="none" stroke="#222" strokeWidth="2.500"><path d="M1 1l5 5 5-5" /></svg>
  </span>
);
const Hr = ({ c }: { c: string }) => <div className={'ml-4 h-[2px] w-[536px] shrink-0 bg-[#d2d2d2] ' + c} />;
const Field = ({ l, v }: { l: string; v: string }) => (
  <div className="flex h-[54px] items-center"><span className="w-[184px] text-right">{l}</span><span className="ml-[18px] flex h-[34px] w-[118px] items-center border border-[#d5d5d5] border-b-[#aaa] bg-white pl-[7px]">{v}</span></div>
);
const P = ({ children, c = '#777' }: Kids & { c?: string }) => <svg viewBox="0 0 60 50" className="h-[50px] w-[60px] shrink-0" fill="none" stroke={c} strokeWidth="2">{children}</svg>;

type S = { n: string; v: string; l: string; left?: boolean };
const sliders: S[] = [
  { n: 'student range width mm', v: '800', l: 'left-[29px] w-[71px]' }, { n: 'student range height mm', v: '1700', l: 'left-[63px] w-[71px]' },
  { n: 'student viewpoint z coordinate', v: '1350', l: 'left-[51px] w-[71px]' }, { n: 'student activity range cloud radius mm', v: '410', l: 'left-[15px] w-[71px]' },
  { n: 'phone width mm', v: '83', l: 'left-[131px] w-[48px]' }, { n: 'phone length mm', v: '163', l: 'left-[255px] w-[48px]', left: true },
  { n: 'phone thickness', v: '12.0', l: 'left-[19px] w-[65px]' }, { n: 'phone table offset', v: '-25', l: 'left-[119px] w-[42px]' }, { n: 'phone viewing angle', v: '50', l: 'left-[65px] w-[48px]' },
];
const sliders2: S[] = [
  { n: 'material thickness', v: '6', l: 'left-[7px] w-[48px]' }, { n: 'base width', v: '100', l: 'left-[157px] w-[48px]', left: true }, { n: '', v: '100', l: 'left-[157px] w-[48px]' },
];
const SliderRow = ({ s }: { s: S }) => (
  <div className={`relative mb-2 flex h-[38px] items-center border-[3px] border-x-4 border-[#8c8c8c] bg-white text-[21px] font-bold text-[#8a8a8a] ${s.left ? 'justify-start pl-[12px]' : 'justify-end pr-[2px]'}`}>
    <span className="tracking-[0.012em]">{s.n}</span>
    <span className={`absolute -top-[2px] flex h-[32px] items-center justify-center border-2 border-[#8c8c8c] bg-[#ececf0] text-[22px] font-normal ${s.l}`}>{s.v}</span>
  </div>
);
const GroupHead = ({ t, open }: { t: string; open?: boolean }) => (
  <div className="flex h-[38px] shrink-0 items-center gap-[9px] pl-[11px] text-[22px] tracking-[0.02em] text-black">
    <svg viewBox="0 0 22 22" className="size-[22px]"><rect width="22" height="22" rx="2" fill="#2a2a2a" /><path d={open ? 'M5 8l6 5 6-5' : 'M8 5l6 6-6 6'} fill="none" stroke="#fff" strokeWidth="3.500" /></svg>{t}
  </div>
);
const Can = ({ k }: { k: number }) => (
  <svg viewBox="0 0 36 34" className="h-[34px] w-9">
    {k === 0 && <g><path d="M9 12l10-7c5-1 9 2 9 6l-1 7-8 4-9-3z" fill="#e4e4e4" stroke="#b5b5b5" /><ellipse cx="17" cy="24" rx="9" ry="6" fill="#333" /></g>}
    {k === 1 && <g fill="#f0f0f0" stroke="#999" strokeWidth="2" transform="rotate(-38 18 17)"><rect x="6" y="8" width="24" height="18" rx="7" /><path d="M13 9v16M22 9v16M13 17h9" /></g>}
    {k === 2 && <g transform="rotate(-38 18 17)"><rect x="5" y="8" width="26" height="18" rx="7" fill="url(#redcan)" stroke="#6a0d06" /><ellipse cx="27" cy="17" rx="4" ry="6" fill="#7c1209" /></g>}
    {k === 3 && <g><path d="M10 7c4-4 14-3 16 1 3 8-4 12-2 19-4 3-10 1-12-2 4-8 2-12-2-18z" fill="#3aa8a4" stroke="#12605e" /><ellipse cx="21" cy="8" rx="5" ry="3" fill="#1d7572" /></g>}
    {k === 4 && <g><path d="M8 18c2 8 8 10 14 12l-4-8z" fill="#e2e2e2" stroke="#999" /><path d="M10 16c0-7 8-12 13-11 6 2 6 8 3 13l-7 9c-4-4-8-6-9-11z" fill="#79b542" stroke="#345c12" /><ellipse cx="22" cy="10" rx="4" ry="3" fill="#3d6e16" /></g>}
    {k === 5 && <g><circle cx="18" cy="17" r="12" fill="#eee" stroke="#999" /><path d="M18 5a12 12 0 0 0 0 24z" fill="#f0a04a" /><ellipse cx="18" cy="17" rx="4" ry="12" fill="#b8651a" opacity=".6" /></g>}
    {k === 6 && <g><circle cx="18" cy="17" r="11" fill="#77aef2" stroke="#3e6fb8" strokeWidth="2" /><ellipse cx="15" cy="12" rx="5" ry="4" fill="#cfe2fb" /></g>}
  </svg>
);

const RightPane = () => (
  <div className="flex min-w-0 flex-1 flex-col overflow-hidden bg-[#ebebeb] text-[22px] tracking-[-0.005em] text-[#242424]">
    <div className="relative flex h-[118px] shrink-0 flex-col items-center border-b-2 border-[#cfcfcf] bg-linear-to-b from-[#f9f9f9] to-[#e1e1e1] pr-[24px]">
      <span className="flex h-12 items-center text-[21px] tracking-[-0.02em]">Properties: Viewport</span>
      <div className="mt-[2px] flex pl-[24px]"><P c="#3a80f5"><path d="M8 12h10l4-5h15l4 5h10v26H8z" /><circle cx="30" cy="26" r="12" /><circle cx="30" cy="26" r="8" /></P><P><rect x="9" y="7" width="42" height="38" strokeWidth="2.500" /><path d="M14 12h32v28H14zM18 16h24v20H18z" stroke="#b5b5b5" strokeWidth="1.500" /></P><P><circle cx="20" cy="35" r="11" /><circle cx="33" cy="24" r="8" stroke="#999" /><circle cx="42" cy="13" r="7" stroke="#aaa" /></P></div>
      <Gear />
    </div>
    <div className="flex h-[792px] shrink-0">
      <div className="flex w-[570px] flex-col">
        <div className="flex h-[73px] shrink-0 items-center"><span className="w-[107px] text-right">Title:</span><span className="ml-[19px] flex h-[34px] w-[401px] items-center border border-[#d5d5d5] border-b-[#aaa] bg-white pl-[7px]">Perspective</span></div>
        <div className="flex h-[26px] shrink-0 items-center"><span className="w-[107px] text-right">Size:</span><span className="ml-[19px]">1272 x 1768</span></div>
        <label className="flex h-[61px] shrink-0 items-center gap-2 pl-14"><Check />Locked</label>
        <Hr c="mt-[7px]" />
        <span className="mt-[15px] flex h-[30px] items-center pl-4">Projection</span>
        <div className="mt-[3px] pl-[58px]">
          <label className="flex h-[30px] items-center gap-[9px]"><Radio />Parallel</label>
          <label className="flex h-[30px] items-center gap-[9px]"><Radio on />Perspective</label>
          <label className="flex h-[30px] items-center gap-[9px]"><Radio />Two point perspective</label>
        </div>
        <Hr c="mt-[44px]" />
        <span className="mt-[15px] flex h-[30px] items-center pl-4">Wallpaper</span>
        <div className="flex h-[58px] items-center pl-[66px]"><span className="w-[176px]">Choose...</span><svg viewBox="0 0 10 16" className="h-4 w-[10px]" fill="none" stroke="#333" strokeWidth="2"><path d="M1 6l4-4 4 4M1 10l4 4 4-4" /></svg></div>
        <label className="flex h-[30px] items-center gap-2 pl-14 text-[#b4b4b4]"><Check dim />Show wallpaper</label>
        <label className="flex h-[58px] items-center gap-2 pl-14 text-[#b4b4b4]"><Check dim />Show wallpaper as gray scale</label>
        <Hr c="mt-[22px]" />
        <span className="mt-[15px] mb-[6px] flex h-[30px] items-center pl-4">Camera</span>
        <Field l="Lens length:" v="50" /><Field l="Rotation:" v="0" /><Field l="X location:" v="-641.46" />
      </div>
      <div className="flex-1 bg-[#fafafa] pt-[7px] pl-[6px]"><div className="h-[527px] w-4 rounded-full bg-[#c1c1c1]" /></div>
    </div>
    <div className="relative flex h-[121px] shrink-0 flex-col items-center border-t-[3px] border-b border-t-[#818181] border-b-[#cfcfcf] bg-linear-to-b from-[#f9f9f9] to-[#e4e4e4]">
      <span className="flex h-12 items-center pr-[20px] text-[21.500px] tracking-[-0.015em]">Panels: Grasshopper</span>
      <div className="mt-[2px] flex self-start pl-[22px]">
        <P><path d="M8 20L31 8l22 12-22 11zM8 26l23 12 22-12" /></P>
        <P><path d="M33 32l-3 1L8 20 30 8l20 11M8 26l21 12h4" /><path d="M35 21h11l7 7v16H35z" /></P>
        <P><path d="M18 8h18l8 8v23H18zM36 8v8h8" /></P>
        <P><path d="M12 17l16-9 20 7v17l-18 11-18-9zM12 17l18 6 18-8M30 23v20" /></P>
        <P><path d="M8 40h26c5 0 4-4 4-8V12c0-6 4-6 10-4l3 6H40M38 9H18c-5 0-4 6-4 10v17H10c-3 0-3 6 0 6M34 40c-4 0-3-5 0-5" /></P>
        <P><rect x="9" y="8" width="42" height="28" rx="3" /><rect x="13" y="12" width="34" height="20" /><path d="M24 36l-2 6M36 36l2 6M17 43h26" /></P>
        <P><circle cx="30" cy="25" r="20" /><path d="M23 20c0-10 15-9 14 0-1 5-7 5-7 11" strokeWidth="4" /><circle cx="30" cy="37" r="2" fill="#777" /></P>
        <P><path d="M13 6h27l6 6v32H13z" /><path d="M18 12h23v26H18zM29 12v26M18 25h23" stroke="#aaa" /></P>
        <P c="#2f7bf6"><circle cx="30" cy="25" r="21" /><path d="M31 4l1 14M47 12L30 20l-19-8" /><path d="M12 40c6-8 4-12 12-16l8-4-1 9-4 7 14 5-10 1-8-2-5 4z" fill="#2f7bf6" /></P>
      </div>
      <Gear />
    </div>
    <div className="flex h-[62px] shrink-0 items-center justify-between pb-1">
      <div className="flex">
        {[0, 1, 2].map((k) => <span key={k} className={'flex h-[41px] w-[52px] items-center justify-center rounded-[9px] border border-black/5 shadow-sm ' + (k === 2 ? 'bg-[#3b86f7]' : 'bg-white')}><Can k={k} /></span>)}
      </div>
      <span className="mr-[-10px] flex h-[41px] w-[52px] items-center rounded-[9px] bg-white pl-2 shadow-sm"><svg viewBox="0 0 40 36" className="h-9 w-10"><path d="M4 30l4-10L26 4l8 6-18 16z" fill="#7cbf3b" stroke="#3f6e14" strokeWidth="2" /><path d="M4 30l4-10 8 6z" fill="#e9c48b" stroke="#444" /></svg></span>
    </div>
    <div className="flex min-h-0 flex-1 overflow-hidden font-['Liberation_Sans',sans-serif]">
      <div className="w-[568px] shrink-0 pt-2 pl-2">
        <div className="h-[515px] rounded-[8px] border-2 border-black bg-[#b0b0b0] px-[6px]">
          <GroupHead t="Context" open />
          <div className="h-[466px] border-2 border-[#222] bg-[#e6e6ea] p-[6px]">
            <div className="mb-[9px] flex h-[38px] items-center border-[3px] border-x-4 border-[#8c8c8c] bg-[#ecedf1] pt-px pl-[12px] text-[21px] font-bold tracking-[0.012em] text-[#8a8a8a]">reset views</div>
            {sliders.map((s) => <SliderRow key={s.n} s={s} />)}
          </div>
        </div>
        <div className="mt-[6px] h-[43px] rounded-[8px] border-2 border-black bg-[#b0b0b0] px-[6px]"><GroupHead t="3D Stand" /></div>
        <div className="mt-[5px] h-[300px] rounded-[8px] border-2 border-black bg-[#b0b0b0] px-[6px]">
          <GroupHead t="2D Stand" open />
          <div className="h-[250px] border-2 border-[#222] bg-[#e6e6ea] p-[7px]">{sliders2.map((s) => <SliderRow key={s.n} s={s} />)}</div>
        </div>
      </div>
      <div className="ml-[6px] mt-px h-[580px] w-6 shrink-0 border-[3px] border-[#333] bg-[#dcdcdc]" />
    </div>
  </div>
);

const FrontWindow = () => (
  <section className="absolute left-[1404px] top-[66px] flex h-[2088px] w-[2180px] flex-col overflow-hidden rounded-l-[20px] bg-[#eeeeee] shadow-[0_20px_70px_rgba(0,0,0,0.6)]">
    <div className="relative flex h-14 shrink-0 items-center">
      <Lights colors={['bg-[#ec6a5f]', 'bg-[#f5bf4f]', 'bg-[#61c454]']} />
      <div className="flex items-center gap-3 pb-[2px] pl-[853px]">
        <svg viewBox="0 0 26 32" className="h-8 w-[26px]"><path d="M1 1h18l6 6v24H1z" fill="#f4f4f4" stroke="#bbb" /><path d="M3 5l8 3 5-2 2 8 6 4-3 8-8-4-6-2-4-8z" fill="#333" /><path d="M6 28h12" stroke="#888" /></svg>
        <b className="text-[26px] tracking-[0.01em] text-[#454545]">CellPhoneStandModel_all_2D.3dm</b>
      </div>
    </div>
    <Chrome active />
    <div className="flex h-[1820px] shrink-0">
      <div className="flex w-80 shrink-0 flex-col bg-[#ebebeb]"><SidePane tall /><Snaps />
        <div className="mt-auto mb-1 h-[26px] bg-[#fafafa] pt-[6px]"><div className="h-4 w-[265px] rounded-r-full bg-[#c1c1c1]" /></div>
      </div>
      <div className="w-[2px] shrink-0 bg-[#777]" />
      <div className="relative w-[1272px] shrink-0">
        <ViewNav single items={[['Perspective', 'w-[223px]'], ['DrawingsView', 'w-[250px]'], ['Layouts...', 'w-[195px]']]} />
        <Scene />
        <span className="absolute left-[2px] top-[54px] flex h-[38px] items-center bg-[#1d528e] px-[9px] text-[25px] font-bold tracking-[-0.02em] text-white">Perspective</span>
      </div>
      <div className="w-[2px] shrink-0 bg-[#777]" />
      <RightPane />
    </div>
    <div className="flex h-14 shrink-0 items-center bg-linear-to-b from-[#d9d9d9] to-[#d1d1d1] pt-[2px] pl-[12px] text-[22px] tracking-[-0.01em] text-[#222]">
      <svg viewBox="0 0 24 20" className="h-5 w-6" stroke="#888" strokeWidth="2"><path d="M6 2h18M6 10h18M6 18h18M0 2h3M0 10h3M0 18h3" /></svg>
      <span className="ml-[5px] w-[1132px] tracking-[0.012em]">Command: '_Zoom</span><span className="w-[147px]">Millimeters</span>
      <span className="flex h-8 w-[139px] items-center justify-between rounded-[6px] border-2 border-[#a3a3a3] pr-2 pl-[9px]">CPlane<svg viewBox="0 0 10 16" className="h-4 w-[10px]" fill="none" stroke="#777" strokeWidth="1.500"><path d="M1 6l4-4 4 4M1 10l4 4 4-4" /></svg></span>
      <span className="ml-[30px] w-[165px]">X: 644.329</span><span className="w-[170px]">Y: 495.098</span><span>Z: 0.000</span>
    </div>
  </section>
);

/* ---------- Grasshopper ---------- */
const H = ({ children, plain }: Kids & { plain?: boolean }) => (
  <svg viewBox="0 0 48 44" className="h-11 w-12" fill="none" stroke="#fff" strokeWidth="2.500">
    {!plain && <path d="M1 22L12 1h24l11 21-11 21H12z" fill="url(#ink)" stroke="#555" strokeWidth="1" />}{children}
  </svg>
);
const Sq = ({ children, f = 'url(#steel)' }: Kids & { f?: string }) => (
  <svg viewBox="0 0 48 48" className="h-12 w-12" fill="none" stroke="#111" strokeWidth="2"><rect x="1.500" y="1.500" width="45" height="45" rx="4" fill={f} strokeWidth="3" />{children}</svg>
);
const SliderIcon = () => <Sq><path d="M20 12h8v12h7L24 33 13 24h7z" fill="#000" stroke="none" /><path d="M6 37h36v4H6zM10 41v3M16 41v3M22 41v3M28 41v3M34 41v3M40 41v3" fill="#222" /></Sq>;
const serif = { fontFamily: 'Liberation Serif', fontWeight: 700, fill: '#eee', stroke: 'none', textAnchor: 'middle' as const };
const Dec = () => <H><text x="24" y="33" fontSize="34" textLength="34" lengthAdjust="spacingAndGlyphs" {...serif}>0.1</text></H>;
const cols: { t: string; w: string; cols: (React.ReactNode[] | '|')[] }[] = [
  { t: 'Geometry', w: 'w-[329px]', cols: [
    [<H key="a"><path d="M18 15l12 14M30 15L18 29" strokeWidth="5" /></H>, <H key="b"><path d="M14 34l14-16" strokeWidth="7" /><path d="M20 12l14-2-2 14z" fill="#fff" strokeWidth="2" /></H>], '|',
    [<H key="a"><circle cx="24" cy="22" r="11" strokeWidth="4" /></H>, <H key="b"><path d="M13 11c14 2 20 14 19 22M24 33h12" strokeWidth="3" /></H>],
    [<H key="a"><ellipse cx="24" cy="22" rx="15" ry="9" transform="rotate(-45 24 22)" /><ellipse cx="24" cy="22" rx="9" ry="4" transform="rotate(-45 24 22)" /></H>, <H key="b"><path d="M15 31L32 13" strokeWidth="3" /><path d="M12 28h6v6h-6zM30 10h6v6h-6z" fill="#222" /></H>],
    [<H key="a"><path d="M9 22l14-12 18 5-15 19z" fill="#666" strokeWidth="3" /><path d="M18 23l9-8 5 2-8 10z" fill="#222" strokeWidth="1.500" /></H>, <H key="b"><path d="M24 6l14 16-14 16-14-16zM17 14l14 16M31 14L17 30" stroke="#bbb" /></H>], '|',
    [<H key="a"><path d="M13 14l11-7 11 7v16l-11 7-11-7z" fill="#999" stroke="#ddd" strokeWidth="1.500" /><path d="M13 14l11 5 11-5M24 19v18" stroke="#ddd" strokeWidth="1.500" /></H>, <H key="b"><path d="M12 22L26 7l10 6v14L22 38l-9-5z" fill="#bbb" stroke="#eee" strokeWidth="1.500" /><ellipse cx="30" cy="14" rx="5" ry="4" fill="#555" stroke="none" /></H>],
  ] },
  { t: 'Primitive', w: 'w-[121px]', cols: [
    [<H key="a"><ellipse cx="24" cy="22" rx="10" ry="13" fill="#fff" /><path d="M16 14c3-5 10-6 13-3-2 8-8 10-10 20-4-4-6-12-3-17z" fill="#111" stroke="none" /></H>, <H key="b"><text x="24" y="35" fontSize="36" {...serif}>7</text></H>],
    [<Dec key="a" />, <H key="b"><text x="24" y="34" fontSize="36" {...serif}>A</text></H>],
  ] },
  { t: 'Input', w: 'w-[272px]', cols: [
    [<SliderIcon key="a" />, <Sq key="b" f="#f6c94e"><path d="M8 36l6-12 2 10 8-16 1 15 8-19 2 14 4-10" stroke="#b0691a" strokeWidth="4" /></Sq>], '|',
    [<Sq key="a"><rect x="14" y="6" width="20" height="36" fill="#ddd" /><rect x="16" y="24" width="16" height="16" fill="#222" /></Sq>, <H key="b" plain><circle cx="24" cy="22" r="21" fill="#8a8a8a" stroke="#444" strokeWidth="2" /><path d="M24 7a15 15 0 1 0 0 30c6 0 10-4 14-15C34 11 30 7 24 7z" fill="#2a2a2a" stroke="#555" strokeWidth="1" /></H>],
    [<Sq key="a"><path d="M24 4l-7 12h12l-5 8" stroke="#888" strokeWidth="4" /><path d="M30 24h-12v10h10l-6 10" stroke="#222" strokeWidth="5" /></Sq>, <Sq key="b"><path d="M7 7h34v8H7zM7 19h34v8H7zM7 31h34v8H7z" fill="#ccc" /></Sq>], '|',
    [<Sq key="a" f="#dd2f82"><rect x="3" y="3" width="42" height="16" fill="#c45ab0" stroke="none" /><path d="M3 30h42" strokeWidth="3" /><circle cx="7" cy="30" r="4" fill="#fff" /><circle cx="33" cy="30" r="4" fill="#fff" /></Sq>, <Sq key="b" f="#6cc233"><g stroke="none"><path d="M3 3h12v10H3zM24 13h12v11H24z" fill="#2d6e12" /><path d="M24 3h10v10H24zM36 13h9v12h-9z" fill="#c4f19a" /><path d="M14 24h10v21H14z" fill="#123c06" /><path d="M34 30h11v15H34z" fill="#8ff0b8" /><path d="M3 24h11v12H3z" fill="#8fdf52" /></g></Sq>],
  ] },
  { t: 'Util', w: 'w-[217px]', cols: [
    [<H key="a" plain><path d="M14 28L23 10l10 22M23 10l2-2" stroke="#7a9a3a" /><path d="M20 0c8 4 4 12-6 14 0-6 2-10 6-14z" fill="#6cb52c" stroke="none" /><circle cx="14" cy="30" r="8" fill="#d0281c" stroke="none" /><circle cx="34" cy="35" r="8" fill="#b51c12" stroke="none" /></H>, <Sq key="b" f="url(#steel)"><path d="M24 44V24M24 32L12 20M24 28l12-12M18 26l-2-14M24 24l2-15M30 22l10 2M16 22l-8 2" strokeWidth="3" /><path d="M9 16l4-6 5-3 6 3 7-3 5 5 4 6-3 2-5-2-4 3-5-4-5 4-5-4z" fill="#222" stroke="none" opacity=".6" /><path d="M3 40h42v6H3z" fill="#111" /></Sq>], '|',
    [<H key="a" plain><path d="M4 14h20V5l20 17-20 17v-9H4z" fill="#555" stroke="#222" /></H>, <H key="b" plain><path d="M4 14h20V5l20 17-20 17v-9H4z" fill="#eee" stroke="#888" /></H>], '|',
    [<H key="a" plain><circle cx="21" cy="15" r="14" fill="#c4c4c4" stroke="#777" strokeWidth="1" /><circle cx="30" cy="27" r="14" fill="#d6548c" stroke="#8a1c4c" strokeWidth="1" opacity=".9" /><circle cx="25" cy="20" r="5" fill="#611" stroke="none" /></H>, <H key="b" plain><path d="M19 1h8v14l11 24c1 4-31 4-30 0l11-24z" fill="#f3dbe6" stroke="#a44" strokeWidth="1" /><path d="M15 23h16l7 16c1 4-31 4-30 0z" fill="#c22d6b" stroke="none" /></H>],
  ] },
  { t: 'OpenNest', w: 'w-[349px]', cols: [
    [<H key="a" plain><g fill="#000" stroke="none"><ellipse cx="34" cy="8" rx="9" ry="7" /><ellipse cx="13" cy="14" rx="9" ry="7" /><path d="M26 20l10 18c-4 6-10 4-12-4zM8 42c-4-2-2-8 4-16l8-2c-2 10-6 18-12 18zM16 18l16-8-6 14z" /></g></H>, <H key="b" plain><path d="M6 42C8 20 18 6 36 4M16 42c2-16 8-26 22-28M28 42c0-10 4-16 10-18" stroke="#444" strokeWidth="3" /></H>], '|',
    [<H key="a" plain><path d="M8 4l34 5-1 9-11-3-3 25h-6l3-26-10-1-2 4-5-1z" stroke="#333" strokeWidth="2" /></H>], '|',
    [<H key="a" plain><path d="M6 14c-1-6 5-12 10-10l24 18v20L8 26zM16 4c-4 4-3 8 0 12l24 10M8 26l8-10" stroke="#333" strokeWidth="2" /></H>], '|',
    [<H key="a" plain><path d="M12 8h32L36 40H4zM17 14h19l-5 18H11z" stroke="#555" strokeWidth="2" /></H>, <H key="b" plain><g stroke="#333" strokeWidth="2"><path d="M4 10l5-8h8l5 8-5 8H9zM28 10l5-8h8l5 8-5 8h-8zM4 32l5-8h8l5 8-5 8H9zM28 32l5-8h8l5 8-5 8h-8z" /></g></H>],
    [<H key="a" plain><path d="M4 40V26l12-4V10L26 2h16v32l-12 8H4zM16 10h16v28M32 10l10-8M8 40V30h8v10" stroke="#222" strokeWidth="2" /></H>, <H key="b" plain><path d="M6 12l12-10 24 10v24L30 44 8 34zM6 12l22 8 14-8M28 20l2 24" stroke="#333" strokeWidth="2" /><g fill="#333" stroke="none"><circle cx="13" cy="22" r="3" /><circle cx="21" cy="32" r="3" /><circle cx="35" cy="24" r="3" /><circle cx="36" cy="34" r="3" /></g></H>],
  ] },
];
const ghTabs = [['Maths', 'w-[88px]'], ['Sets', 'w-[71px]'], ['Vector', 'w-[90px]'], ['Curve', 'w-[86px]'], ['Surface', 'w-[105px]'], ['Mesh', 'w-[82px]'], ['Intersect', 'w-[114px]'], ['Transform', 'w-[127px]'], ['Display', 'w-[100px]'], ['PanelingTools', 'w-[169px]'], ['Kangaroo2', 'w-[138px]'], ['Human', 'w-[74px]']];
const Btn = ({ children, c }: Kids & { c: string }) => <span className={`flex h-10 shrink-0 items-center justify-center rounded-[9px] border border-black/10 shadow-[0_2px_2px_rgba(0,0,0,0.15)] ${c.includes('bg-') ? '' : 'bg-white'} ${c}`}>{children}</span>;

const hits: [string, number, string][] = [
  ['Rectangle', 36, 'bg-linear-to-b from-[#9c9c9c] via-[#dcdcdc] via-40% to-[#ebebeb]'], ['Rectangle [Rectangle Sheet]', 20, 'bg-[#d1d1d1]'], ['Rectangle', 2, 'bg-[#ebebeb]'], ['Rectangle [phone Rectangle]', 180, 'bg-[#d1d1d1]'],
  ['Rectangle', 30, 'bg-[#ebebeb]'], ['Rectangle', 30, 'bg-[#d1d1d1]'], ['Rectangle', 215, 'bg-[#ebebeb]'],
];
const Arrow = ({ a }: { a: number }) => <svg viewBox="0 0 40 40" className="size-10 shrink-0"><path d="M1 12h18V7l20 13-20 13v-5H1z" fill="#1c1c1c" stroke="#000" transform={`rotate(${a} 20 20)`} /></svg>;
const Find = () => (
  <div className="absolute left-[2px] top-[338px] flex h-[580px] w-[448px] flex-col overflow-hidden rounded-[18px] border border-[#b4b4b4] bg-[#e8e8e8] shadow-[0_10px_40px_rgba(0,0,0,0.45)]">
    <div className="relative flex h-[55px] shrink-0 items-center justify-center bg-[#e4e4e4]"><Lights c="left-[15px]" colors={['bg-[#cbcbcb]', 'bg-[#cbcbcb]', 'bg-[#cbcbcb]']} /><b className="pb-px text-[25px] text-[#a7a7a7]">Find...</b></div>
    <div className="mx-px flex h-[34px] shrink-0 items-center justify-center border-y-2 border-[#a9a9a9] bg-white pb-[2px] font-['Liberation_Sans',sans-serif] text-[22px] text-black">angle</div>
    <div className="mx-[2px] mt-6 flex flex-col font-['Liberation_Sans',sans-serif] text-[22px] tracking-[0.012em] text-[#5a5a5a]">
      <div className="flex h-[56px] shrink-0 items-center border-b-2 border-black bg-linear-to-b from-[#cdf08f] from-60% to-[#8aa55c] pr-1 pl-2"><span className="w-[56px]"><SliderIcon /></span><span className="flex-1 whitespace-pre text-[#5d7733]">Number Slider [phone viewin…</span><Arrow a={30} /></div>
      <div className="flex h-[54px] shrink-0 items-center border-b-2 border-black bg-white pr-1 pl-2"><span className="w-[56px]"><Dec /></span><span className="flex-1 whitespace-pre text-[#1a1a1a]">Number [Num phone viewing…</span><Arrow a={2} /></div>
      {hits.map(([t, a, bg], i) => (
        <div key={i} className={`flex h-[54px] shrink-0 items-center pr-1 pl-3 ${bg}`}>
          <svg viewBox="0 0 42 42" className="mr-[10px] size-[42px] shrink-0"><rect x="2" y="2" width="37" height="37" rx="7" fill="#ddd" stroke="#000" strokeWidth="3.500" /><path d="M11 12h18v19H11z" fill="#f2a93b" stroke="#a82c1a" strokeWidth="2" /><path d="M20 12v10h9" fill="none" stroke="#a82c1a" strokeWidth="3" /></svg>
          <span className="flex-1">{t}</span><Arrow a={a} />
        </div>
      ))}
    </div>
  </div>
);

const Canvas = () => (
  <svg viewBox="32 1120 1382 940" className="h-[940px] w-[1382px] shrink-0">
    <defs>
      <linearGradient id="g1" x1="0" y1="0" x2="0" y2="1"><stop offset="0" stopColor="#a5da6e" /><stop offset=".4" stopColor="#84c043" /><stop offset="1" stopColor="#79b83a" /></linearGradient>
      <linearGradient id="g2" x1="0" y1="0" x2="0" y2="1"><stop offset="0" stopColor="#d8f7b0" /><stop offset=".4" stopColor="#b2e674" /><stop offset="1" stopColor="#9fd65e" /></linearGradient>
      <linearGradient id="g3" x1="0" y1="0" x2="0" y2="1"><stop offset="0" stopColor="#6fa832" /><stop offset="1" stopColor="#a6f74a" /></linearGradient>
      <radialGradient id="comp"><stop offset="0" stopColor="#e0e0e0" /><stop offset="1" stopColor="#8a8a8a" /></radialGradient>
    </defs>
    <rect x="32" y="1120" width="1382" height="940" fill="#dbd9d1" />
    <g stroke="#c1bfb8" strokeWidth="3.500"><path d="M141 1120V2060M622 1120V2060M1102 1120V2060M32 1167H1414M32 1327H1414M32 1487H1414M32 1647H1414M32 1807H1414" /></g>
    <path d="M32 1960L1414 1952V1967L32 1974z" fill="#5b5a56" />
    <path d="M30 1983Q120 2000 248 2068" fill="none" stroke="#5b5a56" strokeWidth="17" />
    <rect x="20" y="2005" width="25" height="53" fill="#bbb" stroke="#111" strokeWidth="2.500" />
    <circle cx="704" cy="1663" r="10" fill="#fff" stroke="#000" strokeWidth="6" />
    <rect x="692" y="1393" width="760" height="70" rx="10" fill="none" stroke="#f7f7f4" strokeWidth="3" />
    <rect x="695.500" y="1397" width="345" height="65" rx="8" fill="url(#g1)" stroke="#1c3d0e" strokeWidth="3.500" />
    <rect x="1041" y="1397" width="400" height="65" fill="url(#g2)" stroke="#1c3d0e" strokeWidth="3.500" />
    <path d="M1073 1430H1414M1073 1412v18M1107 1417v13M1141 1417v13M1175 1417v13M1208 1417v13M1242 1412v18M1277 1417v13M1311 1417v13M1345 1417v13M1376 1417v13M1411 1412v18" stroke="#87b35c" strokeWidth="2.500" />
    <circle cx="1119" cy="1430" r="10" fill="#fff" stroke="#000" strokeWidth="6.500" />
    <g fontFamily="Liberation Sans" fontSize="34.500" fill="#0a0a0a"><text x="709" y="1443" fill="#0d2204">phone viewing angle</text><text x="1139" y="1443">50</text></g>
    <rect x="705" y="1516" width="760" height="295" rx="9" fill="none" stroke="#f7f7f4" strokeWidth="3" />
    <rect x="709" y="1520" width="760" height="289" rx="8" fill="#a6f74a" stroke="#222" strokeWidth="3" />
    <path d="M711 1522H1414V1570H711z" fill="#87c43f" /><path d="M711 1572H1414V1592H711z" fill="url(#g3)" /><path d="M710 1571H1414" stroke="#000" strokeWidth="3" />
    <text x="1112" y="1559" fontFamily="Liberation Sans" fontSize="34">notes</text>
    <text x="790" y="1699" fontFamily="Liberation Mono" fontSize="25.600" fill="#12300a">rotate the phone to viewing position "up/</text>
    <g fill="#fff" fillOpacity=".56">
      <path d="M482 1120H804Q705 1205 676 1317L480 1203z" /><path d="M532 2060L1054 1838Q1250 1838 1357 1718L1414 1758V2060z" />
      <path d="M1340 1120H1414V1180Q1395 1180 1340 1120z" />
    </g>
    <path d="M804 1120A408 408 0 0 0 1070 1838C1190 1838 1300 1790 1362 1712Q1385 1684 1414 1677M1340 1122Q1380 1172 1414 1180" fill="none" stroke="#000" strokeWidth="4.500" strokeDasharray="13 9" />
    <g transform="translate(1353 2000)">
      <path d="M-38 -30A46 46 0 0 0 -34 30M36 -30A46 46 0 0 1 20 42" fill="none" stroke="#000" strokeWidth="6" /><path d="M-48 -42l14 0 2 6 12-6-12 16-6-6-4 4z" fill="#000" />
      <circle r="40" fill="url(#comp)" stroke="#000" strokeWidth="5" /><circle r="38" fill="none" stroke="#fff" strokeWidth="3" />
      <path d="M-31 -25l12 2-10 10zM31 -25l-12 2 10 10zM-31 27l12-2-10-10zM31 27l-12-2 10-10z" fill="#fff" />
    </g>
  </svg>
);

const Grasshopper = () => (
  <section className="absolute left-[30px] top-[782px] h-[1328px] w-[1386px]">
    <div className="flex h-full w-full flex-col overflow-hidden rounded-[20px] border-x-2 border-[#cfcfcd] bg-[#ebebea] shadow-[0_10px_50px_rgba(0,0,0,0.5)]">
      <div className="relative flex h-14 shrink-0 items-center justify-center border-b-2 border-[#c4c4c4] bg-[#e6e5e3]"><Lights c="left-[13px]" colors={['bg-[#cdcdcb]', 'bg-[#cdcdcb]', 'bg-[#cdcdcb]']} /><b className="text-[26px] tracking-[0.008em] text-[#a5a5a3]">Grasshopper - CellPhoneStandModel_all*</b></div>
      <div className="flex h-11 shrink-0 items-center text-[23px] tracking-[-0.03em] text-[#6f6f6f]">
        <span className="flex h-full w-[101px] shrink-0 items-center justify-center rounded-t-[10px] border border-b-0 border-[#8c8c8c] bg-linear-to-b from-white to-[#e4e4e4] pr-[2px] pb-[3px] text-black">Params</span>
        <div className="flex h-full flex-1 items-center border-b-2 border-[#9c9c9c] pt-[5px] pl-[12px]">{ghTabs.map(([t, w]) => <span key={t} className={'shrink-0 ' + w}>{t}</span>)}</div>
      </div>
      <div className="flex h-[176px] shrink-0 gap-[7px] border-b-2 border-[#c6c6c6] bg-linear-to-b from-[#d6d6d6] to-[#ebebea] pt-[5px] pl-1 text-[20px]">
        {cols.map((g) => (
          <div key={g.t} className={'flex h-[145px] shrink-0 flex-col overflow-hidden rounded-[8px] border-2 border-[#8f8f8f] bg-linear-to-b from-[#dadada] to-[#ececec] ' + g.w}>
            <div className="flex flex-1 items-start pt-[7px] pl-[2px]">
              {g.cols.map((c, i) => c === '|' ? <i key={i} className="mr-[11px] ml-[8px] h-[98px] w-px shrink-0 bg-[#c8c8c8]" /> : <div key={i} className="flex h-[102px] w-[56px] shrink-0 flex-col items-center justify-start gap-2">{c.map((ic, j) => <span key={j} className="flex h-[47px] items-center">{ic}</span>)}</div>)}
            </div>
            <div className="relative flex h-[27px] shrink-0 items-center justify-center bg-linear-to-b from-[#3a3a3a] to-[#1f1f1f] pr-[22px] tracking-[-0.02em] text-[#ededed]">{g.t}
              <svg viewBox="0 0 14 16" className="absolute right-1 h-4 w-[14px]" fill="#bbb"><path d="M5 0h4v8h5l-7 8-7-8h5z" /></svg></div>
          </div>
        ))}
      </div>
      <div className="flex h-[62px] shrink-0 items-center border-b border-[#d0d0d0] pt-[2px] pl-px">
        <Btn c="w-[50px]"><svg viewBox="0 0 30 32" className="h-8 w-[30px]"><path d="M6 2h14l6 6v10H6z" fill="#eee" stroke="#aaa" /><path d="M3 14h9l3-3h12v18H3z" fill="#80c454" stroke="#4c8a28" /></svg></Btn>
        <Btn c="ml-[5px] w-[51px]"><svg viewBox="0 0 30 32" className="h-8 w-[30px]"><path d="M2 3h26v27H5l-3-3z" fill="#2858c4" stroke="#123484" /><path d="M8 4h14v12H8z" fill="#dde6f6" /><path d="M9 21h12v8H9z" fill="#b9c6e0" /></svg></Btn>
        <i className="ml-[10px] h-8 w-px bg-[#ccc]" />
        <Btn c="ml-[10px] w-[116px]"><span className="w-[74px] pl-[2px] text-[25px] tracking-[-0.03em]">160%</span><span className="flex h-8 w-[32px] items-center justify-center rounded-[7px] shadow-[0_1px_3px_rgba(0,0,0,0.4)]"><svg viewBox="0 0 16 10" className="h-[10px] w-4" fill="none" stroke="#222" strokeWidth="3"><path d="M2 1l6 7 6-7" /></svg></span></Btn>
        <Btn c="ml-[8px] w-[62px]"><svg viewBox="0 0 32 30" className="h-[30px] w-8" fill="none" stroke="#222" strokeWidth="4.500"><path d="M3 11V3h9M20 3h9v8M29 19v8h-9M12 27H3v-8" /><path d="M9 15l4-4v8zM23 15l-4-4v8zM16 8l3 3h-6zM16 22l3-3h-6z" fill="#222" stroke="none" /></svg></Btn>
        <Btn c="ml-[23px] w-[63px]"><svg viewBox="0 0 32 22" className="h-[22px] w-8"><path d="M1 11Q16-6 31 11 16 28 1 11z" fill="#cfe6f6" stroke="#456" strokeWidth="1.500" /><circle cx="16" cy="11" r="7" fill="#4a9ed8" /><circle cx="16" cy="11" r="3" /></svg></Btn>
        <Btn c="ml-[21px] w-[52px]"><svg viewBox="0 0 32 32" className="size-8"><path d="M9 25l8-12 7 5c-2 6-7 9-15 9z" fill="#333" /><path d="M15 18C16 10 22 4 27 3c1 6 0 13-5 19z" fill="#d43a24" /><path d="M8 12c4 6 0 10-1 14 2 3 6 3 10 0" stroke="#933" strokeWidth="2" fill="none" /></svg></Btn>
        <div className="ml-auto flex items-center pr-[19px]"><Btn c="w-[52px]"><Can k={0} /></Btn><Btn c="ml-px w-[52px]"><Can k={1} /></Btn><Btn c="ml-px w-[52px] bg-[#e0e0e0]"><Can k={2} /></Btn><i className="mx-[14px] h-8 w-px bg-[#ccc]" />
          <Btn c="w-[52px]"><Can k={3} /></Btn><Btn c="w-[52px]"><Can k={4} /></Btn><Btn c="w-[52px]"><Can k={5} /></Btn><i className="mx-[5px] h-8 w-px bg-[#ccc]" /><Btn c="w-[63px]"><Can k={6} /></Btn></div>
      </div>
      <Canvas />
      <div className="flex flex-1 items-center border-t-2 border-[#cfcfcf] bg-[#eceae9] pb-[3px] pl-[3px] text-[24px] tracking-[-0.004em] text-[#222]">
        <svg viewBox="0 0 32 32" className="mr-[3px] size-8"><circle cx="16" cy="16" r="15" fill="#1c5db8" stroke="#0c2c62" strokeWidth="2" /><path d="M16 6v13" stroke="#fff" strokeWidth="5" /><circle cx="16" cy="24" r="3" fill="#fff" /></svg>
        <span className="w-[1110px]">Autosave complete (51 seconds ago)</span><span>1.0.0007</span>
      </div>
    </div>
    <Find />
  </section>
);

/* ---------- desktop ---------- */
const stars = [[135, 76], [349, 61], [399, 80], [666, 58], [1088, 55], [1279, 72], [1230, 71], [961, 68], [823, 71], [705, 70], [1328, 62], [2165, 53], [2617, 56], [2765, 51], [2702, 64], [1436, 50], [1537, 50], [7, 515], [19, 522], [9, 252], [7, 304], [23, 149], [375, 51], [1353, 52], [1658, 59], [255, 71]];
const Wallpaper = () => (
  <svg viewBox="0 0 3584 2240" className="absolute inset-0 h-full w-full">
    <defs>
      <linearGradient id="sky" x1="0" y1="0" x2="0" y2="1"><stop offset="0" stopColor="#02040a" /><stop offset=".5" stopColor="#050b16" /></linearGradient>
      <linearGradient id="rk"><stop offset="0" stopColor="#150e0a" /><stop offset=".25" stopColor="#20140f" /><stop offset=".6" stopColor="#301b14" /><stop offset="1" stopColor="#2a1813" /></linearGradient>
      <filter id="rough" x="0" y="0" width="100%" height="100%"><feTurbulence type="fractalNoise" baseFrequency=".012 .03" numOctaves="6" seed="9" /><feColorMatrix values="0 0 0 0 0  0 0 0 0 0  0 0 0 0 0  1.800 0 0 0 -.650" /></filter>
    </defs>
    <rect width="3584" height="2240" fill="url(#sky)" />
    <path d="M0 1010L32 990V2240H0z" fill="#22140d" /><path d="M0 1130L32 1120V1420H0z" fill="#3a2214" opacity=".5" />
    <rect y="2090" width="3584" height="150" fill="url(#rk)" />
    <rect y="2090" width="3584" height="150" filter="url(#rough)" /><rect y="1000" width="32" height="1240" filter="url(#rough)" />
    <path d="M2060 2178Q2072 2200 2088 2212" stroke="#6a554c" strokeWidth="3" fill="none" opacity=".5" />
    {stars.map(([x, y], i) => <circle key={i} cx={x} cy={y} r={i % 4 === 1 ? 1.8 : 1.100} fill="#aab" />)}
  </svg>
);

const menus = [['File', 'w-[84px]'], ['Edit', 'w-[88px]'], ['View', 'w-[100px]'], ['Curve', 'w-[111px]'], ['Surface', 'w-[137px]'], ['SubD', 'w-[106px]'], ['Solid', 'w-[101px]'], ['Mesh', 'w-[106px]'], ['Dimension', 'w-[169px]'], ['Transform', 'w-[164px]'], ['Tools', 'w-[105px]'], ['Analyze', 'w-[137px]'], ['Render', 'w-[128px]'], ['Window', 'w-[138px]'], ['Help', 'w-[361px]']];
const M = ({ children, c }: Kids & { c: string }) => <svg viewBox="0 0 40 36" className={'h-9 w-10 shrink-0 ' + c} fill="none" stroke="#e6e6e6" strokeWidth="2.500">{children}</svg>;
const MenuBar = () => (
  <header className="absolute inset-x-0 top-0 flex h-12 items-center bg-[#03060e] pb-[3px] text-[26px] tracking-[-0.02em] text-[#e8e8e8]">
    <svg viewBox="0 0 26 32" className="ml-10 h-8 w-[26px] shrink-0" fill="#e8e8e8"><path d="M13 9c3 0 4-2 7-1 2 0 4 1 5 3-5 3-4 10 1 12-1 3-4 8-7 8-2 0-3-1-6-1s-4 1-6 1C3 31-2 18 2 11c3-5 8-3 11-2zM13 7c0-3 2-6 6-7 0 4-2 7-6 7z" /></svg>
    <b className="ml-[41px] w-[136px] shrink-0 tracking-[0em]">Rhino 7</b>
    {menus.map(([t, w]) => <span key={t} className={'shrink-0 ' + w}>{t}</span>)}
    <M c="ml-[-8px] mt-1"><path d="M14 6h6v8h-6a4 4 0 0 1 0-8zM20 6h4a4 4 0 0 1 0 8h-4zM14 14h6v8h-6a4 4 0 0 1 0-8zM24 14a4 4 0 1 1-4 4M14 22h6v5a5 5 0 1 1-6-5z" strokeWidth="2" /><circle cx="31" cy="6" r="4" fill="#e6e6e6" stroke="none" /></M>
    <M c="ml-[22px] mt-1"><path d="M7 15V9l8-6M33 15V9l-8-6M20 16v13M20 16l-12-7M20 16l12-7M7 22v5l13 7 13-7v-5" strokeWidth="4" /></M>
    <M c="ml-8 mt-1"><path d="M8 30A12 12 0 0 1 10 12 13 13 0 0 1 34 12M17 31a8 8 0 0 1-2-14c5-4 10 0 14 4l4 5M22 30c-6-4-4-10 2-8" strokeWidth="3" /><circle cx="31" cy="27" r="8" fill="#dd5128" stroke="none" /></M>
    <M c="ml-[40px]"><g fill="#e6e6e6" stroke="none"><ellipse cx="15" cy="14" rx="14" ry="12" /><path d="M4 20v8l8-5z" /></g><ellipse cx="28" cy="24" rx="12" ry="10" fill="#e6e6e6" stroke="#03060e" /><path d="M32 31l6 5v-9z" fill="#e6e6e6" stroke="none" /><g fill="#03060e" stroke="none"><circle cx="10" cy="12" r="2" /><circle cx="19" cy="12" r="2" /><circle cx="24" cy="23" r="1.800" /><circle cx="32" cy="23" r="1.800" /></g></M>
    <span className="ml-[13px] w-[51px]">8</span>
    <M c=""><rect x="4" y="5" width="33" height="24" rx="2" strokeWidth="3" /><path d="M10 10h22v14H10zM15 10v14" strokeWidth="2" /></M>
    <M c="ml-[36px] mt-1"><g fill="#e6e6e6" stroke="none"><circle cx="18" cy="10" r="2" /><circle cx="9" cy="15" r="2" /><circle cx="27" cy="15" r="2" /><circle cx="4" cy="25" r="2" /><circle cx="33" cy="25" r="2" /><path d="M12 24h14v3H12z" /></g></M>
    <M c="ml-[28px] mt-1"><circle cx="20" cy="19" r="12" /><path d="M17 13l8 6-8 6z" fill="#e6e6e6" stroke="none" /></M>
    <span className="mt-[2px] ml-[34px] flex h-8 w-8 shrink-0 items-center justify-center rounded-[6px] bg-[#e6e6e6] text-[20px] font-semibold text-black">US</span>
    <span className="mt-[2px] ml-[11px] w-[76px] text-[24px] tracking-[-0.03em]">U.S.</span>
    <svg viewBox="0 0 54 26" className="mt-[3px] h-[26px] w-[54px] shrink-0"><rect x="1" y="2" width="45" height="22" rx="6" fill="none" stroke="#888" strokeWidth="2" /><rect x="5" y="5" width="37" height="16" rx="3" fill="#e6e6e6" /><path d="M49 9v8" stroke="#888" strokeWidth="3" /><path d="M27 1L14 15h8l-3 10L33 11h-8z" fill="#e6e6e6" stroke="#03060e" strokeWidth="2" /></svg>
    <M c="ml-[32px] mt-1"><path d="M4 13Q20-1 36 13M10 19q10-9 20 0" strokeWidth="4" /><path d="M15 24q5-5 10 0l-5 6z" fill="#e6e6e6" stroke="none" /></M>
    <M c="ml-[27px] mt-1"><circle cx="18" cy="16" r="9.500" /><path d="M25 23l8 9" strokeWidth="3" /></M>
    <M c="ml-[25px] mt-1"><rect x="7" y="6" width="26" height="11" rx="5.500" /><circle cx="12" cy="11.500" r="3" /><rect x="6" y="20" width="28" height="12" rx="6" fill="#e6e6e6" stroke="none" /><circle cx="27" cy="26" r="3.500" fill="#03060e" stroke="none" /></M>
    <M c="ml-[22px] mt-1"><circle cx="20" cy="18" r="14" fill="url(#siri)" stroke="none" /></M>
    <span className="ml-[27px] w-[157px] shrink-0 tracking-[-0.005em]">Thu Aug 31</span><span className="shrink-0 tracking-[-0.005em]">12:25 AM</span>
  </header>
);

export default function App() {
  return (
    <main className="relative h-[2240px] w-[3584px] overflow-hidden bg-[#03060e] font-['Inter',sans-serif] leading-none">
      <Defs />
      <Wallpaper />
      <MenuBar />
      <BackWindow />
      <FrontWindow />
      <Grasshopper />
    </main>
  );
}
